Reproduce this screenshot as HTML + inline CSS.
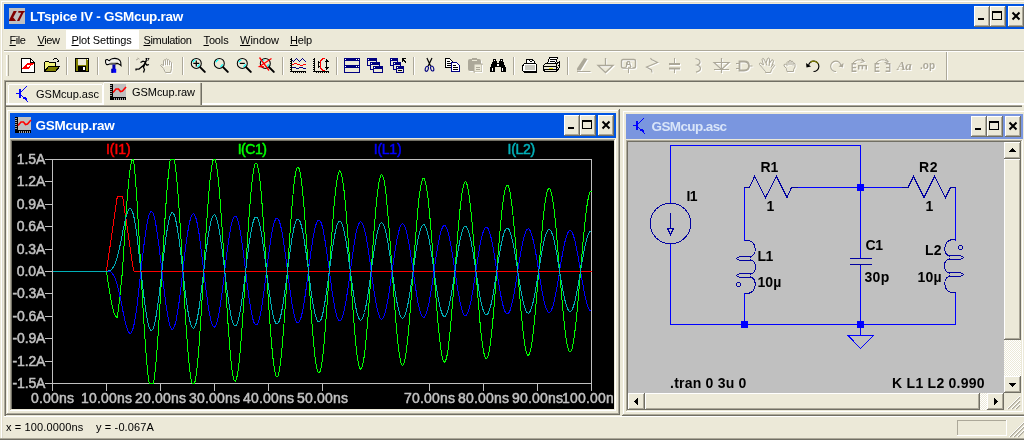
<!DOCTYPE html>
<html><head><meta charset="utf-8"><title>LTspice IV - GSMcup.raw</title>
<style>
html,body{margin:0;padding:0}
body{width:1024px;height:440px;overflow:hidden;background:#ECE9D8;position:relative;font-family:"Liberation Sans",sans-serif}
#app div,#app span,#app svg{position:absolute}
#app span{white-space:pre}
#app u{text-decoration:underline;text-underline-offset:1px}
svg{overflow:visible}
</style></head><body><div id="app" style="position:absolute;left:0;top:0;width:1024px;height:440px;overflow:hidden;will-change:transform">
<div style="left:0px;top:0px;width:1024px;height:440px;background:#ECE9D8;"></div>
<div style="left:1px;top:1px;width:1023px;height:1px;background:#FFFFFF;"></div>
<div style="left:1px;top:1px;width:1px;height:439px;background:#FFFFFF;"></div>
<div style="left:2px;top:2px;width:1022px;height:1px;background:#E0DCCB;"></div>
<div style="left:2px;top:2px;width:1px;height:438px;background:#E0DCCB;"></div>
<div style="left:4px;top:4px;width:1020px;height:25px;background:#0054E3;"></div>
<div style="left:9px;top:8px;width:16px;height:16px;background:#C0C0C0;"></div>
<svg style="left:9px;top:8px" width="16" height="16" viewBox="0 0 16 16"><path d="M4.6 3 H7.8 L4.2 9.6 L5.6 11 L7 13 H0 V12.2 Z M9.3 3 H16 L15.2 4.6 H14.6 L10.4 13 H8 L8.3 12.2 L12.2 4.8 H9.3 Z" fill="#800000"/></svg>
<span style="left:30px;top:9.57px;font-size:13.5px;line-height:13.5px;color:#FFFFFF;font-weight:700;font-style:normal;letter-spacing:-0.273px;">LTspice IV - GSMcup.raw</span>
<div style="left:974px;top:6px;width:16px;height:21px;background:#ECE9D8;"></div>
<div style="left:974px;top:6px;width:16px;height:1px;background:#FFFFFF;"></div>
<div style="left:974px;top:6px;width:1px;height:21px;background:#FFFFFF;"></div>
<div style="left:974px;top:26px;width:16px;height:1px;background:#716F64;"></div>
<div style="left:989px;top:6px;width:1px;height:21px;background:#716F64;"></div>
<div style="left:975px;top:25px;width:14px;height:1px;background:#ACA899;"></div>
<div style="left:988px;top:7px;width:1px;height:19px;background:#ACA899;"></div>
<div style="left:990px;top:6px;width:16px;height:21px;background:#ECE9D8;"></div>
<div style="left:990px;top:6px;width:16px;height:1px;background:#FFFFFF;"></div>
<div style="left:990px;top:6px;width:1px;height:21px;background:#FFFFFF;"></div>
<div style="left:990px;top:26px;width:16px;height:1px;background:#716F64;"></div>
<div style="left:1005px;top:6px;width:1px;height:21px;background:#716F64;"></div>
<div style="left:991px;top:25px;width:14px;height:1px;background:#ACA899;"></div>
<div style="left:1004px;top:7px;width:1px;height:19px;background:#ACA899;"></div>
<div style="left:1008px;top:6px;width:16px;height:21px;background:#ECE9D8;"></div>
<div style="left:1008px;top:6px;width:16px;height:1px;background:#FFFFFF;"></div>
<div style="left:1008px;top:6px;width:1px;height:21px;background:#FFFFFF;"></div>
<div style="left:1008px;top:26px;width:16px;height:1px;background:#716F64;"></div>
<div style="left:1023px;top:6px;width:1px;height:21px;background:#716F64;"></div>
<div style="left:1009px;top:25px;width:14px;height:1px;background:#ACA899;"></div>
<div style="left:1022px;top:7px;width:1px;height:19px;background:#ACA899;"></div>
<div style="left:978px;top:18px;width:6px;height:2px;background:#000;"></div>
<div style="left:992px;top:11px;width:10px;height:9px;background:#000;"></div>
<div style="left:993px;top:13px;width:8px;height:6px;background:#ECE9D8;"></div>
<svg style="left:1012px;top:12px" width="8" height="8" viewBox="0 0 8 8"><path d="M0.5 0.5 L7.5 7.5 M7.5 0.5 L0.5 7.5" stroke="#000" stroke-width="2" fill="none"/></svg>
<div style="left:66px;top:30px;width:73px;height:19px;background:#FFFFFF;"></div>
<span style="left:9.5px;top:34.69px;font-size:11px;line-height:11px;color:#000;font-weight:400;font-style:normal;letter-spacing:-0.434px;"><u>F</u>ile</span>
<span style="left:37.5px;top:34.69px;font-size:11px;line-height:11px;color:#000;font-weight:400;font-style:normal;letter-spacing:-0.414px;"><u>V</u>iew</span>
<span style="left:71.5px;top:34.69px;font-size:11px;line-height:11px;color:#000;font-weight:400;font-style:normal;letter-spacing:-0.136px;"><u>P</u>lot Settings</span>
<span style="left:143.5px;top:34.69px;font-size:11px;line-height:11px;color:#000;font-weight:400;font-style:normal;letter-spacing:-0.336px;"><u>S</u>imulation</span>
<span style="left:203.5px;top:34.69px;font-size:11px;line-height:11px;color:#000;font-weight:400;font-style:normal;letter-spacing:-0.138px;"><u>T</u>ools</span>
<span style="left:240.0px;top:34.69px;font-size:11px;line-height:11px;color:#000;font-weight:400;font-style:normal;letter-spacing:-0.021px;"><u>W</u>indow</span>
<span style="left:290.0px;top:34.69px;font-size:11px;line-height:11px;color:#000;font-weight:400;font-style:normal;letter-spacing:-0.156px;"><u>H</u>elp</span>
<div style="left:4px;top:50px;width:1020px;height:1px;background:#ACA899;"></div>
<div style="left:4px;top:51px;width:1020px;height:1px;background:#FFFFFF;"></div>
<div style="left:6px;top:55px;width:1px;height:21px;background:#FFFFFF;"></div>
<div style="left:7px;top:55px;width:1px;height:21px;background:#ECE9D8;"></div>
<div style="left:8px;top:55px;width:1px;height:21px;background:#ACA899;"></div>
<div style="left:66px;top:57px;width:1px;height:18px;background:#ACA899;"></div>
<div style="left:67px;top:57px;width:1px;height:18px;background:#FFFFFF;"></div>
<div style="left:97px;top:57px;width:1px;height:18px;background:#ACA899;"></div>
<div style="left:98px;top:57px;width:1px;height:18px;background:#FFFFFF;"></div>
<div style="left:128px;top:57px;width:1px;height:18px;background:#ACA899;"></div>
<div style="left:129px;top:57px;width:1px;height:18px;background:#FFFFFF;"></div>
<div style="left:182px;top:57px;width:1px;height:18px;background:#ACA899;"></div>
<div style="left:183px;top:57px;width:1px;height:18px;background:#FFFFFF;"></div>
<div style="left:282px;top:57px;width:1px;height:18px;background:#ACA899;"></div>
<div style="left:283px;top:57px;width:1px;height:18px;background:#FFFFFF;"></div>
<div style="left:336px;top:57px;width:1px;height:18px;background:#ACA899;"></div>
<div style="left:337px;top:57px;width:1px;height:18px;background:#FFFFFF;"></div>
<div style="left:413px;top:57px;width:1px;height:18px;background:#ACA899;"></div>
<div style="left:414px;top:57px;width:1px;height:18px;background:#FFFFFF;"></div>
<div style="left:513px;top:57px;width:1px;height:18px;background:#ACA899;"></div>
<div style="left:514px;top:57px;width:1px;height:18px;background:#FFFFFF;"></div>
<div style="left:567px;top:57px;width:1px;height:18px;background:#ACA899;"></div>
<div style="left:568px;top:57px;width:1px;height:18px;background:#FFFFFF;"></div>
<div style="left:946px;top:52px;width:1px;height:28px;background:#ACA899;"></div>
<div style="left:947px;top:52px;width:1px;height:28px;background:#FFFFFF;"></div>
<div style="left:4px;top:80px;width:1020px;height:1px;background:#ACA899;"></div>
<div style="left:5px;top:81px;width:1019px;height:1px;background:#716F64;"></div>
<div style="left:4px;top:80px;width:1px;height:336px;background:#ACA899;"></div>
<div style="left:5px;top:81px;width:1px;height:335px;background:#716F64;"></div>
<div style="left:9px;top:84px;width:93px;height:1px;background:#FFFFFF;"></div>
<div style="left:8px;top:85px;width:1px;height:18px;background:#FFFFFF;"></div>
<div style="left:102px;top:85px;width:1px;height:18px;background:#FFFFFF;"></div>
<div style="left:104px;top:82px;width:96px;height:1px;background:#FFFFFF;"></div>
<div style="left:103px;top:83px;width:1px;height:21px;background:#FFFFFF;"></div>
<div style="left:200px;top:83px;width:1px;height:21px;background:#ACA899;"></div>
<div style="left:201px;top:83px;width:1px;height:21px;background:#716F64;"></div>
<div style="left:6px;top:103px;width:1018px;height:1px;background:#FFFFFF;"></div>
<div style="left:6px;top:104px;width:1018px;height:1px;background:#FFFFFF;"></div>
<div style="left:104px;top:103px;width:96px;height:2px;background:#ECE9D8;"></div>
<div style="left:200px;top:103px;width:1px;height:2px;background:#ACA899;"></div>
<div style="left:201px;top:103px;width:1px;height:2px;background:#716F64;"></div>
<div style="left:6px;top:105px;width:1016px;height:1px;background:#ACA899;"></div>
<div style="left:6px;top:106px;width:1016px;height:1px;background:#716F64;"></div>
<svg style="left:16px;top:86px" width="12" height="16" viewBox="0 0 12 16" shape-rendering="crispEdges" fill="#0000FF"><rect x="0" y="7" width="4" height="1"/><rect x="3" y="3" width="2" height="9"/><rect x="5" y="5" width="1" height="1"/><rect x="6" y="4" width="1" height="1"/><rect x="7" y="3" width="1" height="1"/><rect x="8" y="2" width="1" height="1"/><rect x="9" y="1" width="1" height="1"/><rect x="10" y="0" width="1" height="1"/><rect x="5" y="9" width="1" height="1"/><rect x="6" y="10" width="1" height="1"/><rect x="7" y="11" width="1" height="1"/><rect x="8" y="12" width="1" height="1"/><rect x="9" y="13" width="1" height="1"/><rect x="10" y="14" width="1" height="1"/><rect x="11" y="15" width="1" height="1"/><rect x="8" y="11" width="2" height="2"/><rect x="9" y="12" width="2" height="2"/><rect x="7" y="12" width="1" height="1"/></svg>
<span style="left:36px;top:88.69px;font-size:11px;line-height:11px;color:#000;font-weight:400;font-style:normal;letter-spacing:0.003px;">GSMcup.asc</span>
<div style="left:110px;top:84px;width:3px;height:16px;background:#000;"></div>
<div style="left:110px;top:97px;width:16px;height:3px;background:#000;"></div>
<div style="left:113px;top:84px;width:13px;height:13px;background:#C0C0C0;"></div>
<div style="left:110px;top:85px;width:2px;height:1px;background:#A0A0A0;"></div>
<div style="left:110px;top:87px;width:2px;height:1px;background:#A0A0A0;"></div>
<div style="left:110px;top:89px;width:2px;height:1px;background:#A0A0A0;"></div>
<div style="left:110px;top:91px;width:2px;height:1px;background:#A0A0A0;"></div>
<div style="left:110px;top:93px;width:2px;height:1px;background:#A0A0A0;"></div>
<div style="left:110px;top:95px;width:2px;height:1px;background:#A0A0A0;"></div>
<div style="left:114px;top:98px;width:1px;height:2px;background:#A0A0A0;"></div>
<div style="left:116px;top:98px;width:1px;height:2px;background:#A0A0A0;"></div>
<div style="left:118px;top:98px;width:1px;height:2px;background:#A0A0A0;"></div>
<div style="left:120px;top:98px;width:1px;height:2px;background:#A0A0A0;"></div>
<div style="left:122px;top:98px;width:1px;height:2px;background:#A0A0A0;"></div>
<div style="left:124px;top:98px;width:1px;height:2px;background:#A0A0A0;"></div>
<svg style="left:110px;top:84px" width="16" height="16" viewBox="0 0 16 16"><path d="M3 8.5 L6 5 L8.5 5 L10.5 7.5 L12.5 7 L16 3" stroke="#FF0000" stroke-width="1.6" fill="none"/></svg>
<span style="left:132px;top:86.69px;font-size:11px;line-height:11px;color:#000;font-weight:400;font-style:normal;letter-spacing:-0.058px;">GSMcup.raw</span>
<div style="left:6px;top:109px;width:614px;height:306px;background:#ECE9D8;"></div>
<div style="left:6px;top:109px;width:614px;height:1px;background:#ECE9D8;"></div>
<div style="left:6px;top:109px;width:1px;height:306px;background:#ECE9D8;"></div>
<div style="left:6px;top:414px;width:614px;height:1px;background:#716F64;"></div>
<div style="left:619px;top:109px;width:1px;height:306px;background:#716F64;"></div>
<div style="left:7px;top:110px;width:612px;height:1px;background:#FFFFFF;"></div>
<div style="left:7px;top:110px;width:1px;height:304px;background:#FFFFFF;"></div>
<div style="left:7px;top:413px;width:612px;height:1px;background:#ACA899;"></div>
<div style="left:618px;top:110px;width:1px;height:304px;background:#ACA899;"></div>
<div style="left:10px;top:113px;width:606px;height:25px;background:#0054E3;"></div>
<div style="left:15px;top:117px;width:3px;height:16px;background:#000;"></div>
<div style="left:15px;top:130px;width:16px;height:3px;background:#000;"></div>
<div style="left:18px;top:117px;width:13px;height:13px;background:#C0C0C0;"></div>
<div style="left:15px;top:118px;width:2px;height:1px;background:#A0A0A0;"></div>
<div style="left:15px;top:120px;width:2px;height:1px;background:#A0A0A0;"></div>
<div style="left:15px;top:122px;width:2px;height:1px;background:#A0A0A0;"></div>
<div style="left:15px;top:124px;width:2px;height:1px;background:#A0A0A0;"></div>
<div style="left:15px;top:126px;width:2px;height:1px;background:#A0A0A0;"></div>
<div style="left:15px;top:128px;width:2px;height:1px;background:#A0A0A0;"></div>
<div style="left:19px;top:131px;width:1px;height:2px;background:#A0A0A0;"></div>
<div style="left:21px;top:131px;width:1px;height:2px;background:#A0A0A0;"></div>
<div style="left:23px;top:131px;width:1px;height:2px;background:#A0A0A0;"></div>
<div style="left:25px;top:131px;width:1px;height:2px;background:#A0A0A0;"></div>
<div style="left:27px;top:131px;width:1px;height:2px;background:#A0A0A0;"></div>
<div style="left:29px;top:131px;width:1px;height:2px;background:#A0A0A0;"></div>
<svg style="left:15px;top:117px" width="16" height="16" viewBox="0 0 16 16"><path d="M3 8.5 L6 5 L8.5 5 L10.5 7.5 L12.5 7 L16 3" stroke="#FF0000" stroke-width="1.6" fill="none"/></svg>
<span style="left:35.5px;top:118.57px;font-size:13.5px;line-height:13.5px;color:#FFFFFF;font-weight:700;font-style:normal;letter-spacing:-0.277px;">GSMcup.raw</span>
<div style="left:564px;top:115px;width:16px;height:21px;background:#ECE9D8;"></div>
<div style="left:564px;top:115px;width:16px;height:1px;background:#FFFFFF;"></div>
<div style="left:564px;top:115px;width:1px;height:21px;background:#FFFFFF;"></div>
<div style="left:564px;top:135px;width:16px;height:1px;background:#716F64;"></div>
<div style="left:579px;top:115px;width:1px;height:21px;background:#716F64;"></div>
<div style="left:565px;top:134px;width:14px;height:1px;background:#ACA899;"></div>
<div style="left:578px;top:116px;width:1px;height:19px;background:#ACA899;"></div>
<div style="left:580px;top:115px;width:16px;height:21px;background:#ECE9D8;"></div>
<div style="left:580px;top:115px;width:16px;height:1px;background:#FFFFFF;"></div>
<div style="left:580px;top:115px;width:1px;height:21px;background:#FFFFFF;"></div>
<div style="left:580px;top:135px;width:16px;height:1px;background:#716F64;"></div>
<div style="left:595px;top:115px;width:1px;height:21px;background:#716F64;"></div>
<div style="left:581px;top:134px;width:14px;height:1px;background:#ACA899;"></div>
<div style="left:594px;top:116px;width:1px;height:19px;background:#ACA899;"></div>
<div style="left:598px;top:115px;width:16px;height:21px;background:#ECE9D8;"></div>
<div style="left:598px;top:115px;width:16px;height:1px;background:#FFFFFF;"></div>
<div style="left:598px;top:115px;width:1px;height:21px;background:#FFFFFF;"></div>
<div style="left:598px;top:135px;width:16px;height:1px;background:#716F64;"></div>
<div style="left:613px;top:115px;width:1px;height:21px;background:#716F64;"></div>
<div style="left:599px;top:134px;width:14px;height:1px;background:#ACA899;"></div>
<div style="left:612px;top:116px;width:1px;height:19px;background:#ACA899;"></div>
<div style="left:568px;top:127px;width:6px;height:2px;background:#000;"></div>
<div style="left:582px;top:120px;width:10px;height:9px;background:#000;"></div>
<div style="left:583px;top:122px;width:8px;height:6px;background:#ECE9D8;"></div>
<svg style="left:602px;top:121px" width="8" height="8" viewBox="0 0 8 8"><path d="M0.5 0.5 L7.5 7.5 M7.5 0.5 L0.5 7.5" stroke="#000" stroke-width="2" fill="none"/></svg>
<div style="left:10px;top:139px;width:606px;height:1px;background:#ACA899;"></div>
<div style="left:10px;top:139px;width:1px;height:272px;background:#ACA899;"></div>
<div style="left:10px;top:410px;width:606px;height:1px;background:#FFFFFF;"></div>
<div style="left:615px;top:139px;width:1px;height:272px;background:#FFFFFF;"></div>
<div style="left:11px;top:140px;width:604px;height:1px;background:#716F64;"></div>
<div style="left:11px;top:140px;width:1px;height:270px;background:#716F64;"></div>
<div style="left:11px;top:409px;width:604px;height:1px;background:#ECE9D8;"></div>
<div style="left:614px;top:140px;width:1px;height:270px;background:#ECE9D8;"></div>
<div style="left:12px;top:141px;width:602px;height:268px;background:#000;"></div>
<div style="left:622px;top:110px;width:406px;height:306px;background:#ECE9D8;"></div>
<div style="left:622px;top:110px;width:406px;height:1px;background:#ECE9D8;"></div>
<div style="left:622px;top:110px;width:1px;height:306px;background:#ECE9D8;"></div>
<div style="left:622px;top:415px;width:406px;height:1px;background:#716F64;"></div>
<div style="left:1027px;top:110px;width:1px;height:306px;background:#716F64;"></div>
<div style="left:623px;top:111px;width:404px;height:1px;background:#FFFFFF;"></div>
<div style="left:623px;top:111px;width:1px;height:304px;background:#FFFFFF;"></div>
<div style="left:623px;top:414px;width:404px;height:1px;background:#ACA899;"></div>
<div style="left:1026px;top:111px;width:1px;height:304px;background:#ACA899;"></div>
<div style="left:626px;top:114px;width:397px;height:25px;background:#7A96DF;"></div>
<svg style="left:633px;top:118px" width="12" height="16" viewBox="0 0 12 16" shape-rendering="crispEdges" fill="#0000FF"><rect x="0" y="7" width="4" height="1"/><rect x="3" y="3" width="2" height="9"/><rect x="5" y="5" width="1" height="1"/><rect x="6" y="4" width="1" height="1"/><rect x="7" y="3" width="1" height="1"/><rect x="8" y="2" width="1" height="1"/><rect x="9" y="1" width="1" height="1"/><rect x="10" y="0" width="1" height="1"/><rect x="5" y="9" width="1" height="1"/><rect x="6" y="10" width="1" height="1"/><rect x="7" y="11" width="1" height="1"/><rect x="8" y="12" width="1" height="1"/><rect x="9" y="13" width="1" height="1"/><rect x="10" y="14" width="1" height="1"/><rect x="11" y="15" width="1" height="1"/><rect x="8" y="11" width="2" height="2"/><rect x="9" y="12" width="2" height="2"/><rect x="7" y="12" width="1" height="1"/></svg>
<span style="left:651.5px;top:119.57px;font-size:13.5px;line-height:13.5px;color:#D8E4F8;font-weight:700;font-style:normal;letter-spacing:-0.603px;">GSMcup.asc</span>
<div style="left:971px;top:116px;width:16px;height:21px;background:#ECE9D8;"></div>
<div style="left:971px;top:116px;width:16px;height:1px;background:#FFFFFF;"></div>
<div style="left:971px;top:116px;width:1px;height:21px;background:#FFFFFF;"></div>
<div style="left:971px;top:136px;width:16px;height:1px;background:#716F64;"></div>
<div style="left:986px;top:116px;width:1px;height:21px;background:#716F64;"></div>
<div style="left:972px;top:135px;width:14px;height:1px;background:#ACA899;"></div>
<div style="left:985px;top:117px;width:1px;height:19px;background:#ACA899;"></div>
<div style="left:987px;top:116px;width:16px;height:21px;background:#ECE9D8;"></div>
<div style="left:987px;top:116px;width:16px;height:1px;background:#FFFFFF;"></div>
<div style="left:987px;top:116px;width:1px;height:21px;background:#FFFFFF;"></div>
<div style="left:987px;top:136px;width:16px;height:1px;background:#716F64;"></div>
<div style="left:1002px;top:116px;width:1px;height:21px;background:#716F64;"></div>
<div style="left:988px;top:135px;width:14px;height:1px;background:#ACA899;"></div>
<div style="left:1001px;top:117px;width:1px;height:19px;background:#ACA899;"></div>
<div style="left:1005px;top:116px;width:16px;height:21px;background:#ECE9D8;"></div>
<div style="left:1005px;top:116px;width:16px;height:1px;background:#FFFFFF;"></div>
<div style="left:1005px;top:116px;width:1px;height:21px;background:#FFFFFF;"></div>
<div style="left:1005px;top:136px;width:16px;height:1px;background:#716F64;"></div>
<div style="left:1020px;top:116px;width:1px;height:21px;background:#716F64;"></div>
<div style="left:1006px;top:135px;width:14px;height:1px;background:#ACA899;"></div>
<div style="left:1019px;top:117px;width:1px;height:19px;background:#ACA899;"></div>
<div style="left:975px;top:128px;width:6px;height:2px;background:#000;"></div>
<div style="left:989px;top:121px;width:10px;height:9px;background:#000;"></div>
<div style="left:990px;top:123px;width:8px;height:6px;background:#ECE9D8;"></div>
<svg style="left:1009px;top:122px" width="8" height="8" viewBox="0 0 8 8"><path d="M0.5 0.5 L7.5 7.5 M7.5 0.5 L0.5 7.5" stroke="#000" stroke-width="2" fill="none"/></svg>
<div style="left:626px;top:140px;width:397px;height:1px;background:#ACA899;"></div>
<div style="left:626px;top:140px;width:1px;height:272px;background:#ACA899;"></div>
<div style="left:626px;top:411px;width:397px;height:1px;background:#FFFFFF;"></div>
<div style="left:1022px;top:140px;width:1px;height:272px;background:#FFFFFF;"></div>
<div style="left:627px;top:141px;width:395px;height:1px;background:#716F64;"></div>
<div style="left:627px;top:141px;width:1px;height:270px;background:#716F64;"></div>
<div style="left:627px;top:410px;width:395px;height:1px;background:#ECE9D8;"></div>
<div style="left:1021px;top:141px;width:1px;height:270px;background:#ECE9D8;"></div>
<div style="left:628px;top:142px;width:376px;height:251px;background:#C0C0C0;"></div>
<div style="left:1004px;top:142px;width:17px;height:268px;background:#ECE9D8;"></div>
<div style="left:1023px;top:140px;width:1px;height:272px;background:#ECE9D8;"></div>
<div style="left:628px;top:393px;width:376px;height:17px;background:#ECE9D8;"></div>
<div style="left:1004px;top:142px;width:17px;height:17px;background:#ECE9D8;"></div>
<div style="left:1004px;top:142px;width:17px;height:1px;background:#FFFFFF;"></div>
<div style="left:1004px;top:142px;width:1px;height:17px;background:#FFFFFF;"></div>
<div style="left:1004px;top:158px;width:17px;height:1px;background:#716F64;"></div>
<div style="left:1020px;top:142px;width:1px;height:17px;background:#716F64;"></div>
<div style="left:1005px;top:157px;width:15px;height:1px;background:#ACA899;"></div>
<div style="left:1019px;top:143px;width:1px;height:15px;background:#ACA899;"></div>
<svg style="left:1009px;top:148px" width="7" height="4" viewBox="0 0 7 4" shape-rendering="crispEdges"><polygon points="0,4 7,4 3.5,0" fill="#000"/></svg>
<div style="left:1004px;top:159px;width:17px;height:181px;background:#ECE9D8;"></div>
<div style="left:1004px;top:159px;width:17px;height:1px;background:#FFFFFF;"></div>
<div style="left:1004px;top:159px;width:1px;height:181px;background:#FFFFFF;"></div>
<div style="left:1004px;top:339px;width:17px;height:1px;background:#716F64;"></div>
<div style="left:1020px;top:159px;width:1px;height:181px;background:#716F64;"></div>
<div style="left:1005px;top:338px;width:15px;height:1px;background:#ACA899;"></div>
<div style="left:1019px;top:160px;width:1px;height:179px;background:#ACA899;"></div>
<div style="left:1004px;top:340px;width:17px;height:36px;background:#F6F4EC;background-image:conic-gradient(#FFF 25%,#ECE9D8 0 50%,#FFF 0 75%,#ECE9D8 0);background-size:2px 2px;"></div>
<div style="left:1004px;top:376px;width:17px;height:17px;background:#ECE9D8;"></div>
<div style="left:1004px;top:376px;width:17px;height:1px;background:#FFFFFF;"></div>
<div style="left:1004px;top:376px;width:1px;height:17px;background:#FFFFFF;"></div>
<div style="left:1004px;top:392px;width:17px;height:1px;background:#716F64;"></div>
<div style="left:1020px;top:376px;width:1px;height:17px;background:#716F64;"></div>
<div style="left:1005px;top:391px;width:15px;height:1px;background:#ACA899;"></div>
<div style="left:1019px;top:377px;width:1px;height:15px;background:#ACA899;"></div>
<svg style="left:1009px;top:383px" width="7" height="4" viewBox="0 0 7 4" shape-rendering="crispEdges"><polygon points="0,0 7,0 3.5,4" fill="#000"/></svg>
<div style="left:628px;top:393px;width:17px;height:17px;background:#ECE9D8;"></div>
<div style="left:628px;top:393px;width:17px;height:1px;background:#FFFFFF;"></div>
<div style="left:628px;top:393px;width:1px;height:17px;background:#FFFFFF;"></div>
<div style="left:628px;top:409px;width:17px;height:1px;background:#716F64;"></div>
<div style="left:644px;top:393px;width:1px;height:17px;background:#716F64;"></div>
<div style="left:629px;top:408px;width:15px;height:1px;background:#ACA899;"></div>
<div style="left:643px;top:394px;width:1px;height:15px;background:#ACA899;"></div>
<svg style="left:634px;top:398px" width="4" height="7" viewBox="0 0 4 7" shape-rendering="crispEdges"><polygon points="4,0 4,7 0,3.5" fill="#000"/></svg>
<div style="left:645px;top:393px;width:335px;height:17px;background:#ECE9D8;"></div>
<div style="left:645px;top:393px;width:335px;height:1px;background:#FFFFFF;"></div>
<div style="left:645px;top:393px;width:1px;height:17px;background:#FFFFFF;"></div>
<div style="left:645px;top:409px;width:335px;height:1px;background:#716F64;"></div>
<div style="left:979px;top:393px;width:1px;height:17px;background:#716F64;"></div>
<div style="left:646px;top:408px;width:333px;height:1px;background:#ACA899;"></div>
<div style="left:978px;top:394px;width:1px;height:15px;background:#ACA899;"></div>
<div style="left:980px;top:393px;width:7px;height:17px;background:#F6F4EC;background-image:conic-gradient(#FFF 25%,#ECE9D8 0 50%,#FFF 0 75%,#ECE9D8 0);background-size:2px 2px;"></div>
<div style="left:987px;top:393px;width:17px;height:17px;background:#ECE9D8;"></div>
<div style="left:987px;top:393px;width:17px;height:1px;background:#FFFFFF;"></div>
<div style="left:987px;top:393px;width:1px;height:17px;background:#FFFFFF;"></div>
<div style="left:987px;top:409px;width:17px;height:1px;background:#716F64;"></div>
<div style="left:1003px;top:393px;width:1px;height:17px;background:#716F64;"></div>
<div style="left:988px;top:408px;width:15px;height:1px;background:#ACA899;"></div>
<div style="left:1002px;top:394px;width:1px;height:15px;background:#ACA899;"></div>
<svg style="left:994px;top:398px" width="4" height="7" viewBox="0 0 4 7" shape-rendering="crispEdges"><polygon points="0,0 0,7 4,3.5" fill="#000"/></svg>
<svg style="left:1004px;top:393px" width="17" height="17" viewBox="0 0 17 17"><path d="M4 16 L16 4 M8 16 L16 8 M12 16 L16 12" stroke="#ACA899" stroke-width="1.5"/><path d="M3 16 L16 3 M7 16 L16 7 M11 16 L16 11" stroke="#FFF" stroke-width="1"/></svg>
<div style="left:4px;top:416px;width:1020px;height:1px;background:#FFFFFF;"></div>
<span style="left:6px;top:422.19px;font-size:11px;line-height:11px;color:#000;font-weight:400;font-style:normal;letter-spacing:0.127px;">x = 100.0000ns    y = -0.067A</span>
<div style="left:957px;top:420px;width:50px;height:1px;background:#ACA899;"></div>
<div style="left:957px;top:420px;width:1px;height:16px;background:#ACA899;"></div>
<div style="left:957px;top:435px;width:50px;height:1px;background:#FFFFFF;"></div>
<div style="left:1006px;top:420px;width:1px;height:16px;background:#FFFFFF;"></div>
<svg style="left:1008px;top:421px" width="16" height="16" viewBox="0 0 16 16"><path d="M2 16 L16 2 M6 16 L16 6 M10 16 L16 10" stroke="#ACA899" stroke-width="1.5"/><path d="M1 16 L16 1 M5 16 L16 5 M9 16 L16 9" stroke="#FFF" stroke-width="1"/></svg>
<div style="left:0px;top:438px;width:1024px;height:1px;background:#ACA899;"></div>
<div style="left:0px;top:439px;width:1024px;height:1px;background:#716F64;"></div>
<div id="plot" style="left:0;top:0;width:613px;height:409px;overflow:hidden">
<div style="left:52px;top:159px;width:540px;height:1px;background:#C0C0C0;"></div>
<div style="left:52px;top:383px;width:540px;height:1px;background:#C0C0C0;"></div>
<div style="left:52px;top:159px;width:1px;height:232px;background:#C0C0C0;"></div>
<div style="left:591px;top:159px;width:1px;height:232px;background:#C0C0C0;"></div>
<div style="left:45px;top:159px;width:7px;height:1px;background:#C0C0C0;"></div>
<span style="left:16.8px;top:152.15px;font-size:14px;line-height:14px;color:#C0C0C0;font-weight:400;font-style:normal;letter-spacing:-0.103px;-webkit-text-stroke:0.5px;">1.5A</span>
<div style="left:45px;top:181px;width:7px;height:1px;background:#C0C0C0;"></div>
<span style="left:16.8px;top:174.15px;font-size:14px;line-height:14px;color:#C0C0C0;font-weight:400;font-style:normal;letter-spacing:-0.103px;-webkit-text-stroke:0.5px;">1.2A</span>
<div style="left:45px;top:204px;width:7px;height:1px;background:#C0C0C0;"></div>
<span style="left:16.8px;top:197.15px;font-size:14px;line-height:14px;color:#C0C0C0;font-weight:400;font-style:normal;letter-spacing:-0.103px;-webkit-text-stroke:0.5px;">0.9A</span>
<div style="left:45px;top:226px;width:7px;height:1px;background:#C0C0C0;"></div>
<span style="left:16.8px;top:219.15px;font-size:14px;line-height:14px;color:#C0C0C0;font-weight:400;font-style:normal;letter-spacing:-0.103px;-webkit-text-stroke:0.5px;">0.6A</span>
<div style="left:45px;top:249px;width:7px;height:1px;background:#C0C0C0;"></div>
<span style="left:16.8px;top:242.15px;font-size:14px;line-height:14px;color:#C0C0C0;font-weight:400;font-style:normal;letter-spacing:-0.103px;-webkit-text-stroke:0.5px;">0.3A</span>
<div style="left:45px;top:271px;width:7px;height:1px;background:#C0C0C0;"></div>
<span style="left:16.8px;top:264.15px;font-size:14px;line-height:14px;color:#C0C0C0;font-weight:400;font-style:normal;letter-spacing:-0.103px;-webkit-text-stroke:0.5px;">0.0A</span>
<div style="left:45px;top:293px;width:7px;height:1px;background:#C0C0C0;"></div>
<span style="left:12.5px;top:286.15px;font-size:14px;line-height:14px;color:#C0C0C0;font-weight:400;font-style:normal;letter-spacing:-0.154px;-webkit-text-stroke:0.5px;">-0.3A</span>
<div style="left:45px;top:316px;width:7px;height:1px;background:#C0C0C0;"></div>
<span style="left:12.5px;top:309.15px;font-size:14px;line-height:14px;color:#C0C0C0;font-weight:400;font-style:normal;letter-spacing:-0.154px;-webkit-text-stroke:0.5px;">-0.6A</span>
<div style="left:45px;top:338px;width:7px;height:1px;background:#C0C0C0;"></div>
<span style="left:12.5px;top:331.15px;font-size:14px;line-height:14px;color:#C0C0C0;font-weight:400;font-style:normal;letter-spacing:-0.154px;-webkit-text-stroke:0.5px;">-0.9A</span>
<div style="left:45px;top:361px;width:7px;height:1px;background:#C0C0C0;"></div>
<span style="left:12.5px;top:354.15px;font-size:14px;line-height:14px;color:#C0C0C0;font-weight:400;font-style:normal;letter-spacing:-0.154px;-webkit-text-stroke:0.5px;">-1.2A</span>
<div style="left:45px;top:383px;width:7px;height:1px;background:#C0C0C0;"></div>
<span style="left:12.5px;top:376.15px;font-size:14px;line-height:14px;color:#C0C0C0;font-weight:400;font-style:normal;letter-spacing:-0.154px;-webkit-text-stroke:0.5px;">-1.5A</span>
<span style="left:30.9px;top:391.35px;font-size:14px;line-height:14px;color:#C0C0C0;font-weight:400;font-style:normal;letter-spacing:0.226px;-webkit-text-stroke:0.5px;">0.00ns</span>
<div style="left:106px;top:384px;width:1px;height:7px;background:#C0C0C0;"></div>
<span style="left:80.9px;top:391.35px;font-size:14px;line-height:14px;color:#C0C0C0;font-weight:400;font-style:normal;letter-spacing:0.225px;-webkit-text-stroke:0.5px;">10.00ns</span>
<div style="left:160px;top:384px;width:1px;height:7px;background:#C0C0C0;"></div>
<span style="left:134.9px;top:391.35px;font-size:14px;line-height:14px;color:#C0C0C0;font-weight:400;font-style:normal;letter-spacing:0.225px;-webkit-text-stroke:0.5px;">20.00ns</span>
<div style="left:214px;top:384px;width:1px;height:7px;background:#C0C0C0;"></div>
<span style="left:188.9px;top:391.35px;font-size:14px;line-height:14px;color:#C0C0C0;font-weight:400;font-style:normal;letter-spacing:0.225px;-webkit-text-stroke:0.5px;">30.00ns</span>
<div style="left:268px;top:384px;width:1px;height:7px;background:#C0C0C0;"></div>
<span style="left:242.9px;top:391.35px;font-size:14px;line-height:14px;color:#C0C0C0;font-weight:400;font-style:normal;letter-spacing:0.225px;-webkit-text-stroke:0.5px;">40.00ns</span>
<div style="left:322px;top:384px;width:1px;height:7px;background:#C0C0C0;"></div>
<span style="left:296.9px;top:391.35px;font-size:14px;line-height:14px;color:#C0C0C0;font-weight:400;font-style:normal;letter-spacing:0.225px;-webkit-text-stroke:0.5px;">50.00ns</span>
<div style="left:429px;top:384px;width:1px;height:7px;background:#C0C0C0;"></div>
<span style="left:403.9px;top:391.35px;font-size:14px;line-height:14px;color:#C0C0C0;font-weight:400;font-style:normal;letter-spacing:0.225px;-webkit-text-stroke:0.5px;">70.00ns</span>
<div style="left:483px;top:384px;width:1px;height:7px;background:#C0C0C0;"></div>
<span style="left:457.9px;top:391.35px;font-size:14px;line-height:14px;color:#C0C0C0;font-weight:400;font-style:normal;letter-spacing:0.225px;-webkit-text-stroke:0.5px;">80.00ns</span>
<div style="left:537px;top:384px;width:1px;height:7px;background:#C0C0C0;"></div>
<span style="left:511.9px;top:391.35px;font-size:14px;line-height:14px;color:#C0C0C0;font-weight:400;font-style:normal;letter-spacing:0.225px;-webkit-text-stroke:0.5px;">90.00ns</span>
<span style="left:561.9px;top:391.35px;font-size:14px;line-height:14px;color:#C0C0C0;font-weight:400;font-style:normal;letter-spacing:0.224px;-webkit-text-stroke:0.5px;">100.00ns</span>
<span style="left:106px;top:142.15px;font-size:14px;line-height:14px;color:#FF0000;font-weight:400;font-style:normal;letter-spacing:-0.078px;-webkit-text-stroke:0.5px;">I(I1)</span>
<span style="left:237.7px;top:142.15px;font-size:14px;line-height:14px;color:#00FF00;font-weight:400;font-style:normal;letter-spacing:-0.465px;-webkit-text-stroke:0.5px;">I(C1)</span>
<span style="left:373.8px;top:142.15px;font-size:14px;line-height:14px;color:#0000FF;font-weight:400;font-style:normal;letter-spacing:-0.259px;-webkit-text-stroke:0.5px;">I(L1)</span>
<span style="left:507.5px;top:142.15px;font-size:14px;line-height:14px;color:#00B0B8;font-weight:400;font-style:normal;letter-spacing:-0.259px;-webkit-text-stroke:0.5px;">I(L2)</span>
<svg style="left:0;top:0" width="1024" height="440" viewBox="0 0 1024 440" shape-rendering="crispEdges"><path d="M52.5 271.0 L53.0 271.0 L53.5 271.0 L54.0 271.0 L54.5 271.0 L55.0 271.0 L55.5 271.0 L56.0 271.0 L56.5 271.0 L57.0 271.0 L57.5 271.0 L58.0 271.0 L58.5 271.0 L59.0 271.0 L59.5 271.0 L60.0 271.0 L60.4 271.0 L60.9 271.0 L61.4 271.0 L61.9 271.0 L62.4 271.0 L62.9 271.0 L63.4 271.0 L63.9 271.0 L64.4 271.0 L64.9 271.0 L65.4 271.0 L65.9 271.0 L66.4 271.0 L66.9 271.0 L67.4 271.0 L67.9 271.0 L68.4 271.0 L68.9 271.0 L69.4 271.0 L69.9 271.0 L70.4 271.0 L70.9 271.0 L71.4 271.0 L71.9 271.0 L72.4 271.0 L72.9 271.0 L73.4 271.0 L73.9 271.0 L74.4 271.0 L74.9 271.0 L75.4 271.0 L75.8 271.0 L76.3 271.0 L76.8 271.0 L77.3 271.0 L77.8 271.0 L78.3 271.0 L78.8 271.0 L79.3 271.0 L79.8 271.0 L80.3 271.0 L80.8 271.0 L81.3 271.0 L81.8 271.0 L82.3 271.0 L82.8 271.0 L83.3 271.0 L83.8 271.0 L84.3 271.0 L84.8 271.0 L85.3 271.0 L85.8 271.0 L86.3 271.0 L86.8 271.0 L87.3 271.0 L87.8 271.0 L88.3 271.0 L88.8 271.0 L89.3 271.0 L89.8 271.0 L90.3 271.0 L90.8 271.0 L91.3 271.0 L91.7 271.0 L92.2 271.0 L92.7 271.0 L93.2 271.0 L93.7 271.0 L94.2 271.0 L94.7 271.0 L95.2 271.0 L95.7 271.0 L96.2 271.0 L96.7 271.0 L97.2 271.0 L97.7 271.0 L98.2 271.0 L98.7 271.0 L99.2 271.0 L99.7 271.0 L100.2 271.0 L100.7 271.0 L101.2 271.0 L101.7 271.0 L102.2 271.0 L102.7 271.0 L103.2 271.0 L103.7 271.0 L104.2 271.0 L104.7 271.0 L105.2 271.0 L105.7 271.0 L106.2 271.0 L106.7 270.0 L107.1 266.5 L107.6 263.1 L108.1 259.7 L108.6 256.2 L109.1 252.8 L109.6 249.3 L110.1 245.9 L110.6 242.5 L111.1 239.0 L111.6 235.6 L112.1 232.2 L112.6 228.7 L113.1 225.3 L113.6 221.9 L114.1 218.4 L114.6 215.0 L115.1 211.6 L115.6 208.1 L116.1 204.7 L116.6 201.3 L117.1 197.8 L117.6 196.3 L118.1 196.3 L118.6 196.3 L119.1 196.3 L119.6 196.3 L120.1 196.3 L120.6 196.3 L121.1 196.3 L121.6 196.3 L122.1 196.3 L122.5 196.3 L123.0 198.7 L123.5 202.2 L124.0 205.6 L124.5 209.0 L125.0 212.5 L125.5 215.9 L126.0 219.3 L126.5 222.8 L127.0 226.2 L127.5 229.6 L128.0 233.1 L128.5 236.5 L129.0 239.9 L129.5 243.4 L130.0 246.8 L130.5 250.2 L131.0 253.7 L131.5 257.1 L132.0 260.5 L132.5 264.0 L133.0 267.4 L133.5 270.9 L134.0 271.0 L134.5 271.0 L135.0 271.0 L135.5 271.0 L136.0 271.0 L136.5 271.0 L137.0 271.0 L137.5 271.0 L137.9 271.0 L138.4 271.0 L138.9 271.0 L139.4 271.0 L139.9 271.0 L140.4 271.0 L140.9 271.0 L141.4 271.0 L141.9 271.0 L142.4 271.0 L142.9 271.0 L143.4 271.0 L143.9 271.0 L144.4 271.0 L144.9 271.0 L145.4 271.0 L145.9 271.0 L146.4 271.0 L146.9 271.0 L147.4 271.0 L147.9 271.0 L148.4 271.0 L148.9 271.0 L149.4 271.0 L149.9 271.0 L150.4 271.0 L150.9 271.0 L151.4 271.0 L151.9 271.0 L152.4 271.0 L152.9 271.0 L153.4 271.0 L153.8 271.0 L154.3 271.0 L154.8 271.0 L155.3 271.0 L155.8 271.0 L156.3 271.0 L156.8 271.0 L157.3 271.0 L157.8 271.0 L158.3 271.0 L158.8 271.0 L159.3 271.0 L159.8 271.0 L160.3 271.0 L160.8 271.0 L161.3 271.0 L161.8 271.0 L162.3 271.0 L162.8 271.0 L163.3 271.0 L163.8 271.0 L164.3 271.0 L164.8 271.0 L165.3 271.0 L165.8 271.0 L166.3 271.0 L166.8 271.0 L167.3 271.0 L167.8 271.0 L168.3 271.0 L168.8 271.0 L169.2 271.0 L169.7 271.0 L170.2 271.0 L170.7 271.0 L171.2 271.0 L171.7 271.0 L172.2 271.0 L172.7 271.0 L173.2 271.0 L173.7 271.0 L174.2 271.0 L174.7 271.0 L175.2 271.0 L175.7 271.0 L176.2 271.0 L176.7 271.0 L177.2 271.0 L177.7 271.0 L178.2 271.0 L178.7 271.0 L179.2 271.0 L179.7 271.0 L180.2 271.0 L180.7 271.0 L181.2 271.0 L181.7 271.0 L182.2 271.0 L182.7 271.0 L183.2 271.0 L183.7 271.0 L184.2 271.0 L184.6 271.0 L185.1 271.0 L185.6 271.0 L186.1 271.0 L186.6 271.0 L187.1 271.0 L187.6 271.0 L188.1 271.0 L188.6 271.0 L189.1 271.0 L189.6 271.0 L190.1 271.0 L190.6 271.0 L191.1 271.0 L191.6 271.0 L192.1 271.0 L192.6 271.0 L193.1 271.0 L193.6 271.0 L194.1 271.0 L194.6 271.0 L195.1 271.0 L195.6 271.0 L196.1 271.0 L196.6 271.0 L197.1 271.0 L197.6 271.0 L198.1 271.0 L198.6 271.0 L199.1 271.0 L199.6 271.0 L200.0 271.0 L200.5 271.0 L201.0 271.0 L201.5 271.0 L202.0 271.0 L202.5 271.0 L203.0 271.0 L203.5 271.0 L204.0 271.0 L204.5 271.0 L205.0 271.0 L205.5 271.0 L206.0 271.0 L206.5 271.0 L207.0 271.0 L207.5 271.0 L208.0 271.0 L208.5 271.0 L209.0 271.0 L209.5 271.0 L210.0 271.0 L210.5 271.0 L211.0 271.0 L211.5 271.0 L212.0 271.0 L212.5 271.0 L213.0 271.0 L213.5 271.0 L214.0 271.0 L214.5 271.0 L215.0 271.0 L215.5 271.0 L215.9 271.0 L216.4 271.0 L216.9 271.0 L217.4 271.0 L217.9 271.0 L218.4 271.0 L218.9 271.0 L219.4 271.0 L219.9 271.0 L220.4 271.0 L220.9 271.0 L221.4 271.0 L221.9 271.0 L222.4 271.0 L222.9 271.0 L223.4 271.0 L223.9 271.0 L224.4 271.0 L224.9 271.0 L225.4 271.0 L225.9 271.0 L226.4 271.0 L226.9 271.0 L227.4 271.0 L227.9 271.0 L228.4 271.0 L228.9 271.0 L229.4 271.0 L229.9 271.0 L230.4 271.0 L230.9 271.0 L231.3 271.0 L231.8 271.0 L232.3 271.0 L232.8 271.0 L233.3 271.0 L233.8 271.0 L234.3 271.0 L234.8 271.0 L235.3 271.0 L235.8 271.0 L236.3 271.0 L236.8 271.0 L237.3 271.0 L237.8 271.0 L238.3 271.0 L238.8 271.0 L239.3 271.0 L239.8 271.0 L240.3 271.0 L240.8 271.0 L241.3 271.0 L241.8 271.0 L242.3 271.0 L242.8 271.0 L243.3 271.0 L243.8 271.0 L244.3 271.0 L244.8 271.0 L245.3 271.0 L245.8 271.0 L246.3 271.0 L246.7 271.0 L247.2 271.0 L247.7 271.0 L248.2 271.0 L248.7 271.0 L249.2 271.0 L249.7 271.0 L250.2 271.0 L250.7 271.0 L251.2 271.0 L251.7 271.0 L252.2 271.0 L252.7 271.0 L253.2 271.0 L253.7 271.0 L254.2 271.0 L254.7 271.0 L255.2 271.0 L255.7 271.0 L256.2 271.0 L256.7 271.0 L257.2 271.0 L257.7 271.0 L258.2 271.0 L258.7 271.0 L259.2 271.0 L259.7 271.0 L260.2 271.0 L260.7 271.0 L261.2 271.0 L261.7 271.0 L262.1 271.0 L262.6 271.0 L263.1 271.0 L263.6 271.0 L264.1 271.0 L264.6 271.0 L265.1 271.0 L265.6 271.0 L266.1 271.0 L266.6 271.0 L267.1 271.0 L267.6 271.0 L268.1 271.0 L268.6 271.0 L269.1 271.0 L269.6 271.0 L270.1 271.0 L270.6 271.0 L271.1 271.0 L271.6 271.0 L272.1 271.0 L272.6 271.0 L273.1 271.0 L273.6 271.0 L274.1 271.0 L274.6 271.0 L275.1 271.0 L275.6 271.0 L276.1 271.0 L276.6 271.0 L277.1 271.0 L277.6 271.0 L278.0 271.0 L278.5 271.0 L279.0 271.0 L279.5 271.0 L280.0 271.0 L280.5 271.0 L281.0 271.0 L281.5 271.0 L282.0 271.0 L282.5 271.0 L283.0 271.0 L283.5 271.0 L284.0 271.0 L284.5 271.0 L285.0 271.0 L285.5 271.0 L286.0 271.0 L286.5 271.0 L287.0 271.0 L287.5 271.0 L288.0 271.0 L288.5 271.0 L289.0 271.0 L289.5 271.0 L290.0 271.0 L290.5 271.0 L291.0 271.0 L291.5 271.0 L292.0 271.0 L292.5 271.0 L293.0 271.0 L293.4 271.0 L293.9 271.0 L294.4 271.0 L294.9 271.0 L295.4 271.0 L295.9 271.0 L296.4 271.0 L296.9 271.0 L297.4 271.0 L297.9 271.0 L298.4 271.0 L298.9 271.0 L299.4 271.0 L299.9 271.0 L300.4 271.0 L300.9 271.0 L301.4 271.0 L301.9 271.0 L302.4 271.0 L302.9 271.0 L303.4 271.0 L303.9 271.0 L304.4 271.0 L304.9 271.0 L305.4 271.0 L305.9 271.0 L306.4 271.0 L306.9 271.0 L307.4 271.0 L307.9 271.0 L308.4 271.0 L308.8 271.0 L309.3 271.0 L309.8 271.0 L310.3 271.0 L310.8 271.0 L311.3 271.0 L311.8 271.0 L312.3 271.0 L312.8 271.0 L313.3 271.0 L313.8 271.0 L314.3 271.0 L314.8 271.0 L315.3 271.0 L315.8 271.0 L316.3 271.0 L316.8 271.0 L317.3 271.0 L317.8 271.0 L318.3 271.0 L318.8 271.0 L319.3 271.0 L319.8 271.0 L320.3 271.0 L320.8 271.0 L321.3 271.0 L321.8 271.0 L322.3 271.0 L322.8 271.0 L323.3 271.0 L323.8 271.0 L324.2 271.0 L324.7 271.0 L325.2 271.0 L325.7 271.0 L326.2 271.0 L326.7 271.0 L327.2 271.0 L327.7 271.0 L328.2 271.0 L328.7 271.0 L329.2 271.0 L329.7 271.0 L330.2 271.0 L330.7 271.0 L331.2 271.0 L331.7 271.0 L332.2 271.0 L332.7 271.0 L333.2 271.0 L333.7 271.0 L334.2 271.0 L334.7 271.0 L335.2 271.0 L335.7 271.0 L336.2 271.0 L336.7 271.0 L337.2 271.0 L337.7 271.0 L338.2 271.0 L338.7 271.0 L339.2 271.0 L339.7 271.0 L340.1 271.0 L340.6 271.0 L341.1 271.0 L341.6 271.0 L342.1 271.0 L342.6 271.0 L343.1 271.0 L343.6 271.0 L344.1 271.0 L344.6 271.0 L345.1 271.0 L345.6 271.0 L346.1 271.0 L346.6 271.0 L347.1 271.0 L347.6 271.0 L348.1 271.0 L348.6 271.0 L349.1 271.0 L349.6 271.0 L350.1 271.0 L350.6 271.0 L351.1 271.0 L351.6 271.0 L352.1 271.0 L352.6 271.0 L353.1 271.0 L353.6 271.0 L354.1 271.0 L354.6 271.0 L355.1 271.0 L355.5 271.0 L356.0 271.0 L356.5 271.0 L357.0 271.0 L357.5 271.0 L358.0 271.0 L358.5 271.0 L359.0 271.0 L359.5 271.0 L360.0 271.0 L360.5 271.0 L361.0 271.0 L361.5 271.0 L362.0 271.0 L362.5 271.0 L363.0 271.0 L363.5 271.0 L364.0 271.0 L364.5 271.0 L365.0 271.0 L365.5 271.0 L366.0 271.0 L366.5 271.0 L367.0 271.0 L367.5 271.0 L368.0 271.0 L368.5 271.0 L369.0 271.0 L369.5 271.0 L370.0 271.0 L370.5 271.0 L370.9 271.0 L371.4 271.0 L371.9 271.0 L372.4 271.0 L372.9 271.0 L373.4 271.0 L373.9 271.0 L374.4 271.0 L374.9 271.0 L375.4 271.0 L375.9 271.0 L376.4 271.0 L376.9 271.0 L377.4 271.0 L377.9 271.0 L378.4 271.0 L378.9 271.0 L379.4 271.0 L379.9 271.0 L380.4 271.0 L380.9 271.0 L381.4 271.0 L381.9 271.0 L382.4 271.0 L382.9 271.0 L383.4 271.0 L383.9 271.0 L384.4 271.0 L384.9 271.0 L385.4 271.0 L385.9 271.0 L386.3 271.0 L386.8 271.0 L387.3 271.0 L387.8 271.0 L388.3 271.0 L388.8 271.0 L389.3 271.0 L389.8 271.0 L390.3 271.0 L390.8 271.0 L391.3 271.0 L391.8 271.0 L392.3 271.0 L392.8 271.0 L393.3 271.0 L393.8 271.0 L394.3 271.0 L394.8 271.0 L395.3 271.0 L395.8 271.0 L396.3 271.0 L396.8 271.0 L397.3 271.0 L397.8 271.0 L398.3 271.0 L398.8 271.0 L399.3 271.0 L399.8 271.0 L400.3 271.0 L400.8 271.0 L401.3 271.0 L401.8 271.0 L402.2 271.0 L402.7 271.0 L403.2 271.0 L403.7 271.0 L404.2 271.0 L404.7 271.0 L405.2 271.0 L405.7 271.0 L406.2 271.0 L406.7 271.0 L407.2 271.0 L407.7 271.0 L408.2 271.0 L408.7 271.0 L409.2 271.0 L409.7 271.0 L410.2 271.0 L410.7 271.0 L411.2 271.0 L411.7 271.0 L412.2 271.0 L412.7 271.0 L413.2 271.0 L413.7 271.0 L414.2 271.0 L414.7 271.0 L415.2 271.0 L415.7 271.0 L416.2 271.0 L416.7 271.0 L417.2 271.0 L417.6 271.0 L418.1 271.0 L418.6 271.0 L419.1 271.0 L419.6 271.0 L420.1 271.0 L420.6 271.0 L421.1 271.0 L421.6 271.0 L422.1 271.0 L422.6 271.0 L423.1 271.0 L423.6 271.0 L424.1 271.0 L424.6 271.0 L425.1 271.0 L425.6 271.0 L426.1 271.0 L426.6 271.0 L427.1 271.0 L427.6 271.0 L428.1 271.0 L428.6 271.0 L429.1 271.0 L429.6 271.0 L430.1 271.0 L430.6 271.0 L431.1 271.0 L431.6 271.0 L432.1 271.0 L432.6 271.0 L433.0 271.0 L433.5 271.0 L434.0 271.0 L434.5 271.0 L435.0 271.0 L435.5 271.0 L436.0 271.0 L436.5 271.0 L437.0 271.0 L437.5 271.0 L438.0 271.0 L438.5 271.0 L439.0 271.0 L439.5 271.0 L440.0 271.0 L440.5 271.0 L441.0 271.0 L441.5 271.0 L442.0 271.0 L442.5 271.0 L443.0 271.0 L443.5 271.0 L444.0 271.0 L444.5 271.0 L445.0 271.0 L445.5 271.0 L446.0 271.0 L446.5 271.0 L447.0 271.0 L447.5 271.0 L448.0 271.0 L448.4 271.0 L448.9 271.0 L449.4 271.0 L449.9 271.0 L450.4 271.0 L450.9 271.0 L451.4 271.0 L451.9 271.0 L452.4 271.0 L452.9 271.0 L453.4 271.0 L453.9 271.0 L454.4 271.0 L454.9 271.0 L455.4 271.0 L455.9 271.0 L456.4 271.0 L456.9 271.0 L457.4 271.0 L457.9 271.0 L458.4 271.0 L458.9 271.0 L459.4 271.0 L459.9 271.0 L460.4 271.0 L460.9 271.0 L461.4 271.0 L461.9 271.0 L462.4 271.0 L462.9 271.0 L463.4 271.0 L463.9 271.0 L464.3 271.0 L464.8 271.0 L465.3 271.0 L465.8 271.0 L466.3 271.0 L466.8 271.0 L467.3 271.0 L467.8 271.0 L468.3 271.0 L468.8 271.0 L469.3 271.0 L469.8 271.0 L470.3 271.0 L470.8 271.0 L471.3 271.0 L471.8 271.0 L472.3 271.0 L472.8 271.0 L473.3 271.0 L473.8 271.0 L474.3 271.0 L474.8 271.0 L475.3 271.0 L475.8 271.0 L476.3 271.0 L476.8 271.0 L477.3 271.0 L477.8 271.0 L478.3 271.0 L478.8 271.0 L479.3 271.0 L479.7 271.0 L480.2 271.0 L480.7 271.0 L481.2 271.0 L481.7 271.0 L482.2 271.0 L482.7 271.0 L483.2 271.0 L483.7 271.0 L484.2 271.0 L484.7 271.0 L485.2 271.0 L485.7 271.0 L486.2 271.0 L486.7 271.0 L487.2 271.0 L487.7 271.0 L488.2 271.0 L488.7 271.0 L489.2 271.0 L489.7 271.0 L490.2 271.0 L490.7 271.0 L491.2 271.0 L491.7 271.0 L492.2 271.0 L492.7 271.0 L493.2 271.0 L493.7 271.0 L494.2 271.0 L494.7 271.0 L495.1 271.0 L495.6 271.0 L496.1 271.0 L496.6 271.0 L497.1 271.0 L497.6 271.0 L498.1 271.0 L498.6 271.0 L499.1 271.0 L499.6 271.0 L500.1 271.0 L500.6 271.0 L501.1 271.0 L501.6 271.0 L502.1 271.0 L502.6 271.0 L503.1 271.0 L503.6 271.0 L504.1 271.0 L504.6 271.0 L505.1 271.0 L505.6 271.0 L506.1 271.0 L506.6 271.0 L507.1 271.0 L507.6 271.0 L508.1 271.0 L508.6 271.0 L509.1 271.0 L509.6 271.0 L510.1 271.0 L510.5 271.0 L511.0 271.0 L511.5 271.0 L512.0 271.0 L512.5 271.0 L513.0 271.0 L513.5 271.0 L514.0 271.0 L514.5 271.0 L515.0 271.0 L515.5 271.0 L516.0 271.0 L516.5 271.0 L517.0 271.0 L517.5 271.0 L518.0 271.0 L518.5 271.0 L519.0 271.0 L519.5 271.0 L520.0 271.0 L520.5 271.0 L521.0 271.0 L521.5 271.0 L522.0 271.0 L522.5 271.0 L523.0 271.0 L523.5 271.0 L524.0 271.0 L524.5 271.0 L525.0 271.0 L525.5 271.0 L526.0 271.0 L526.4 271.0 L526.9 271.0 L527.4 271.0 L527.9 271.0 L528.4 271.0 L528.9 271.0 L529.4 271.0 L529.9 271.0 L530.4 271.0 L530.9 271.0 L531.4 271.0 L531.9 271.0 L532.4 271.0 L532.9 271.0 L533.4 271.0 L533.9 271.0 L534.4 271.0 L534.9 271.0 L535.4 271.0 L535.9 271.0 L536.4 271.0 L536.9 271.0 L537.4 271.0 L537.9 271.0 L538.4 271.0 L538.9 271.0 L539.4 271.0 L539.9 271.0 L540.4 271.0 L540.9 271.0 L541.4 271.0 L541.8 271.0 L542.3 271.0 L542.8 271.0 L543.3 271.0 L543.8 271.0 L544.3 271.0 L544.8 271.0 L545.3 271.0 L545.8 271.0 L546.3 271.0 L546.8 271.0 L547.3 271.0 L547.8 271.0 L548.3 271.0 L548.8 271.0 L549.3 271.0 L549.8 271.0 L550.3 271.0 L550.8 271.0 L551.3 271.0 L551.8 271.0 L552.3 271.0 L552.8 271.0 L553.3 271.0 L553.8 271.0 L554.3 271.0 L554.8 271.0 L555.3 271.0 L555.8 271.0 L556.3 271.0 L556.8 271.0 L557.2 271.0 L557.7 271.0 L558.2 271.0 L558.7 271.0 L559.2 271.0 L559.7 271.0 L560.2 271.0 L560.7 271.0 L561.2 271.0 L561.7 271.0 L562.2 271.0 L562.7 271.0 L563.2 271.0 L563.7 271.0 L564.2 271.0 L564.7 271.0 L565.2 271.0 L565.7 271.0 L566.2 271.0 L566.7 271.0 L567.2 271.0 L567.7 271.0 L568.2 271.0 L568.7 271.0 L569.2 271.0 L569.7 271.0 L570.2 271.0 L570.7 271.0 L571.2 271.0 L571.7 271.0 L572.2 271.0 L572.6 271.0 L573.1 271.0 L573.6 271.0 L574.1 271.0 L574.6 271.0 L575.1 271.0 L575.6 271.0 L576.1 271.0 L576.6 271.0 L577.1 271.0 L577.6 271.0 L578.1 271.0 L578.6 271.0 L579.1 271.0 L579.6 271.0 L580.1 271.0 L580.6 271.0 L581.1 271.0 L581.6 271.0 L582.1 271.0 L582.6 271.0 L583.1 271.0 L583.6 271.0 L584.1 271.0 L584.6 271.0 L585.1 271.0 L585.6 271.0 L586.1 271.0 L586.6 271.0 L587.1 271.0 L587.6 271.0 L588.1 271.0 L588.5 271.0 L589.0 271.0 L589.5 271.0 L590.0 271.0 L590.5 271.0 L591.0 271.0 L591.5 271.0" stroke="#FF0000" stroke-width="1" fill="none"/><path d="M52.5 271.0 L53.0 271.0 L53.5 271.0 L54.0 271.0 L54.5 271.0 L55.0 271.0 L55.5 271.0 L56.0 271.0 L56.5 271.0 L57.0 271.0 L57.5 271.0 L58.0 271.0 L58.5 271.0 L59.0 271.0 L59.5 271.0 L60.0 271.0 L60.4 271.0 L60.9 271.0 L61.4 271.0 L61.9 271.0 L62.4 271.0 L62.9 271.0 L63.4 271.0 L63.9 271.0 L64.4 271.0 L64.9 271.0 L65.4 271.0 L65.9 271.0 L66.4 271.0 L66.9 271.0 L67.4 271.0 L67.9 271.0 L68.4 271.0 L68.9 271.0 L69.4 271.0 L69.9 271.0 L70.4 271.0 L70.9 271.0 L71.4 271.0 L71.9 271.0 L72.4 271.0 L72.9 271.0 L73.4 271.0 L73.9 271.0 L74.4 271.0 L74.9 271.0 L75.4 271.0 L75.8 271.0 L76.3 271.0 L76.8 271.0 L77.3 271.0 L77.8 271.0 L78.3 271.0 L78.8 271.0 L79.3 271.0 L79.8 271.0 L80.3 271.0 L80.8 271.0 L81.3 271.0 L81.8 271.0 L82.3 271.0 L82.8 271.0 L83.3 271.0 L83.8 271.0 L84.3 271.0 L84.8 271.0 L85.3 271.0 L85.8 271.0 L86.3 271.0 L86.8 271.0 L87.3 271.0 L87.8 271.0 L88.3 271.0 L88.8 271.0 L89.3 271.0 L89.8 271.0 L90.3 271.0 L90.8 271.0 L91.3 271.0 L91.7 271.0 L92.2 271.0 L92.7 271.0 L93.2 271.0 L93.7 271.0 L94.2 271.0 L94.7 271.0 L95.2 271.0 L95.7 271.0 L96.2 271.0 L96.7 271.0 L97.2 271.0 L97.7 271.0 L98.2 271.0 L98.7 271.0 L99.2 271.0 L99.7 271.0 L100.2 271.0 L100.7 271.0 L101.2 271.0 L101.7 271.0 L102.2 271.0 L102.7 271.0 L103.2 271.0 L103.7 271.0 L104.2 271.0 L104.7 271.0 L105.2 271.0 L105.7 271.0 L106.2 271.0 L106.7 272.0 L107.1 275.5 L107.6 278.9 L108.1 282.2 L108.6 285.5 L109.1 288.7 L109.6 291.9 L110.1 294.9 L110.6 297.7 L111.1 300.5 L111.6 303.0 L112.1 305.4 L112.6 307.6 L113.1 309.6 L113.6 311.4 L114.1 312.9 L114.6 314.2 L115.1 315.3 L115.6 316.2 L116.1 316.8 L116.6 317.1 L117.1 317.2 L117.6 315.1 L118.1 311.2 L118.6 307.2 L119.1 302.9 L119.6 298.5 L120.1 293.9 L120.6 289.2 L121.1 284.4 L121.6 279.5 L122.1 274.6 L122.5 269.7 L123.0 262.4 L123.5 254.1 L124.0 245.9 L124.5 237.8 L125.0 230.0 L125.5 222.3 L126.0 215.0 L126.5 207.9 L127.0 201.2 L127.5 194.9 L128.0 189.0 L128.5 183.6 L129.0 178.7 L129.5 174.3 L130.0 170.4 L130.5 167.1 L131.0 164.3 L131.5 162.2 L132.0 160.6 L132.5 159.7 L133.0 159.4 L133.5 159.7 L134.0 163.8 L134.5 168.8 L135.0 174.3 L135.5 180.3 L136.0 186.8 L136.5 193.8 L137.0 201.2 L137.5 209.0 L137.9 217.2 L138.4 225.6 L138.9 234.2 L139.4 243.1 L139.9 252.1 L140.4 261.2 L140.9 270.4 L141.4 279.3 L141.9 288.2 L142.4 297.0 L142.9 305.6 L143.4 314.0 L143.9 322.2 L144.4 330.1 L144.9 337.7 L145.4 344.8 L145.9 351.6 L146.4 357.9 L146.9 363.7 L147.4 369.0 L147.9 373.8 L148.4 377.9 L148.9 381.5 L149.4 383.0 L149.9 383.0 L150.4 383.0 L150.9 383.0 L151.4 383.0 L151.9 383.0 L152.4 383.0 L152.9 383.0 L153.4 383.0 L153.8 381.9 L154.3 378.4 L154.8 374.3 L155.3 369.7 L155.8 364.5 L156.3 358.7 L156.8 352.6 L157.3 345.9 L157.8 338.9 L158.3 331.4 L158.8 323.7 L159.3 315.6 L159.8 307.4 L160.3 298.9 L160.8 290.3 L161.3 281.6 L161.8 272.8 L162.3 264.0 L162.8 255.3 L163.3 246.7 L163.8 238.2 L164.3 229.9 L164.8 221.8 L165.3 214.0 L165.8 206.6 L166.3 199.5 L166.8 192.8 L167.3 186.6 L167.8 180.8 L168.3 175.5 L168.8 170.8 L169.2 166.6 L169.7 163.0 L170.2 160.0 L170.7 159.0 L171.2 159.0 L171.7 159.0 L172.2 159.0 L172.7 159.0 L173.2 159.0 L173.7 159.0 L174.2 159.1 L174.7 161.8 L175.2 165.1 L175.7 169.1 L176.2 173.6 L176.7 178.6 L177.2 184.1 L177.7 190.1 L178.2 196.6 L178.7 203.5 L179.2 210.7 L179.7 218.3 L180.2 226.1 L180.7 234.2 L181.2 242.5 L181.7 250.9 L182.2 259.5 L182.7 268.1 L183.2 276.7 L183.7 285.3 L184.2 293.7 L184.6 302.1 L185.1 310.3 L185.6 318.2 L186.1 325.9 L186.6 333.2 L187.1 340.2 L187.6 346.9 L188.1 353.0 L188.6 358.8 L189.1 364.0 L189.6 368.7 L190.1 372.9 L190.6 376.5 L191.1 379.5 L191.6 381.9 L192.1 383.0 L192.6 383.0 L193.1 383.0 L193.6 383.0 L194.1 383.0 L194.6 383.0 L195.1 381.1 L195.6 378.5 L196.1 375.3 L196.6 371.6 L197.1 367.2 L197.6 362.4 L198.1 357.0 L198.6 351.2 L199.1 344.9 L199.6 338.2 L200.0 331.1 L200.5 323.8 L201.0 316.1 L201.5 308.2 L202.0 300.1 L202.5 291.8 L203.0 283.4 L203.5 275.0 L204.0 266.6 L204.5 258.2 L205.0 249.8 L205.5 241.6 L206.0 233.6 L206.5 225.7 L207.0 218.2 L207.5 210.9 L208.0 204.0 L208.5 197.4 L209.0 191.3 L209.5 185.6 L210.0 180.4 L210.5 175.7 L211.0 171.6 L211.5 167.9 L212.0 164.9 L212.5 162.5 L213.0 160.6 L213.5 159.4 L214.0 159.0 L214.5 159.0 L215.0 159.5 L215.5 160.8 L215.9 162.6 L216.4 165.1 L216.9 168.2 L217.4 171.8 L217.9 176.0 L218.4 180.7 L218.9 185.9 L219.4 191.6 L219.9 197.7 L220.4 204.2 L220.9 211.0 L221.4 218.2 L221.9 225.7 L222.4 233.5 L222.9 241.4 L223.4 249.5 L223.9 257.7 L224.4 265.9 L224.9 274.2 L225.4 282.5 L225.9 290.7 L226.4 298.8 L226.9 306.7 L227.4 314.4 L227.9 321.8 L228.4 329.0 L228.9 335.8 L229.4 342.3 L229.9 348.4 L230.4 354.0 L230.9 359.2 L231.3 363.9 L231.8 368.0 L232.3 371.7 L232.8 374.7 L233.3 377.2 L233.8 379.1 L234.3 380.3 L234.8 381.0 L235.3 381.1 L235.8 380.5 L236.3 379.4 L236.8 377.6 L237.3 375.2 L237.8 372.3 L238.3 368.8 L238.8 364.8 L239.3 360.3 L239.8 355.2 L240.3 349.7 L240.8 343.8 L241.3 337.5 L241.8 330.8 L242.3 323.7 L242.8 316.4 L243.3 308.9 L243.8 301.1 L244.3 293.2 L244.8 285.2 L245.3 277.1 L245.8 268.9 L246.3 260.8 L246.7 252.8 L247.2 244.8 L247.7 237.0 L248.2 229.5 L248.7 222.1 L249.2 215.0 L249.7 208.3 L250.2 201.9 L250.7 195.8 L251.2 190.3 L251.7 185.1 L252.2 180.5 L252.7 176.3 L253.2 172.7 L253.7 169.6 L254.2 167.1 L254.7 165.2 L255.2 163.9 L255.7 163.1 L256.2 163.0 L256.7 163.4 L257.2 164.5 L257.7 166.2 L258.2 168.4 L258.7 171.2 L259.2 174.5 L259.7 178.4 L260.2 182.8 L260.7 187.7 L261.2 193.0 L261.7 198.8 L262.1 204.9 L262.6 211.5 L263.1 218.3 L263.6 225.4 L264.1 232.8 L264.6 240.4 L265.1 248.2 L265.6 256.0 L266.1 264.0 L266.6 271.9 L267.1 279.9 L267.6 287.8 L268.1 295.6 L268.6 303.3 L269.1 310.8 L269.6 318.0 L270.1 325.0 L270.6 331.7 L271.1 338.0 L271.6 344.0 L272.1 349.5 L272.6 354.6 L273.1 359.2 L273.6 363.4 L274.1 367.0 L274.6 370.1 L275.1 372.6 L275.6 374.6 L276.1 376.0 L276.6 376.8 L277.1 377.0 L277.6 376.6 L278.0 375.7 L278.5 374.1 L279.0 372.0 L279.5 369.3 L280.0 366.1 L280.5 362.4 L281.0 358.1 L281.5 353.4 L282.0 348.2 L282.5 342.6 L283.0 336.6 L283.5 330.3 L284.0 323.6 L284.5 316.7 L285.0 309.4 L285.5 302.0 L286.0 294.4 L286.5 286.7 L287.0 279.0 L287.5 271.1 L288.0 263.3 L288.5 255.5 L289.0 247.9 L289.5 240.3 L290.0 233.0 L290.5 225.8 L291.0 218.9 L291.5 212.3 L292.0 206.1 L292.5 200.2 L293.0 194.7 L293.4 189.6 L293.9 185.0 L294.4 180.9 L294.9 177.3 L295.4 174.2 L295.9 171.6 L296.4 169.6 L296.9 168.2 L297.4 167.3 L297.9 167.0 L298.4 167.3 L298.9 168.2 L299.4 169.6 L299.9 171.6 L300.4 174.1 L300.9 177.2 L301.4 180.8 L301.9 184.9 L302.4 189.5 L302.9 194.5 L303.4 199.9 L303.9 205.8 L304.4 212.0 L304.9 218.5 L305.4 225.3 L305.9 232.3 L306.4 239.6 L306.9 247.0 L307.4 254.5 L307.9 262.2 L308.4 269.8 L308.8 277.5 L309.3 285.1 L309.8 292.7 L310.3 300.1 L310.8 307.3 L311.3 314.4 L311.8 321.2 L312.3 327.7 L312.8 333.9 L313.3 339.7 L313.8 345.2 L314.3 350.2 L314.8 354.8 L315.3 358.9 L315.8 362.5 L316.3 365.6 L316.8 368.2 L317.3 370.2 L317.8 371.7 L318.3 372.7 L318.8 373.0 L319.3 372.8 L319.8 372.0 L320.3 370.7 L320.8 368.8 L321.3 366.4 L321.8 363.4 L322.3 360.0 L322.8 356.0 L323.3 351.6 L323.8 346.7 L324.2 341.5 L324.7 335.8 L325.2 329.8 L325.7 323.4 L326.2 316.8 L326.7 309.9 L327.2 302.8 L327.7 295.6 L328.2 288.2 L328.7 280.7 L329.2 273.2 L329.7 265.6 L330.2 258.1 L330.7 250.7 L331.2 243.4 L331.7 236.3 L332.2 229.4 L332.7 222.7 L333.2 216.2 L333.7 210.1 L334.2 204.3 L334.7 199.0 L335.2 194.0 L335.7 189.4 L336.2 185.3 L336.7 181.7 L337.2 178.6 L337.7 176.0 L338.2 173.9 L338.7 172.3 L339.2 171.4 L339.7 170.9 L340.1 171.1 L340.6 171.7 L341.1 173.0 L341.6 174.7 L342.1 177.1 L342.6 179.9 L343.1 183.2 L343.6 187.0 L344.1 191.3 L344.6 196.0 L345.1 201.2 L345.6 206.7 L346.1 212.5 L346.6 218.7 L347.1 225.2 L347.6 231.9 L348.1 238.8 L348.6 245.9 L349.1 253.2 L349.6 260.5 L350.1 267.9 L350.6 275.3 L351.1 282.6 L351.6 289.9 L352.1 297.1 L352.6 304.1 L353.1 310.9 L353.6 317.6 L354.1 323.9 L354.6 329.9 L355.1 335.6 L355.5 341.0 L356.0 345.9 L356.5 350.5 L357.0 354.6 L357.5 358.2 L358.0 361.3 L358.5 363.9 L359.0 366.0 L359.5 367.6 L360.0 368.7 L360.5 369.2 L361.0 369.1 L361.5 368.5 L362.0 367.4 L362.5 365.7 L363.0 363.5 L363.5 360.8 L364.0 357.6 L364.5 353.9 L365.0 349.8 L365.5 345.2 L366.0 340.2 L366.5 334.9 L367.0 329.2 L367.5 323.1 L368.0 316.8 L368.5 310.3 L369.0 303.5 L369.5 296.5 L370.0 289.5 L370.5 282.3 L370.9 275.0 L371.4 267.8 L371.9 260.6 L372.4 253.4 L372.9 246.4 L373.4 239.4 L373.9 232.7 L374.4 226.2 L374.9 219.9 L375.4 214.0 L375.9 208.3 L376.4 203.0 L376.9 198.1 L377.4 193.6 L377.9 189.5 L378.4 185.9 L378.9 182.8 L379.4 180.1 L379.9 178.0 L380.4 176.4 L380.9 175.3 L381.4 174.7 L381.9 174.7 L382.4 175.2 L382.9 176.3 L383.4 177.8 L383.9 179.9 L384.4 182.5 L384.9 185.6 L385.4 189.1 L385.9 193.1 L386.3 197.6 L386.8 202.4 L387.3 207.6 L387.8 213.2 L388.3 219.0 L388.8 225.2 L389.3 231.6 L389.8 238.2 L390.3 245.0 L390.8 251.9 L391.3 259.0 L391.8 266.1 L392.3 273.2 L392.8 280.3 L393.3 287.3 L393.8 294.2 L394.3 301.1 L394.8 307.7 L395.3 314.1 L395.8 320.3 L396.3 326.2 L396.8 331.8 L397.3 337.0 L397.8 341.9 L398.3 346.4 L398.8 350.4 L399.3 354.0 L399.8 357.2 L400.3 359.8 L400.8 362.0 L401.3 363.6 L401.8 364.8 L402.2 365.4 L402.7 365.5 L403.2 365.1 L403.7 364.1 L404.2 362.6 L404.7 360.7 L405.2 358.2 L405.7 355.2 L406.2 351.8 L406.7 348.0 L407.2 343.7 L407.7 339.0 L408.2 333.9 L408.7 328.5 L409.2 322.8 L409.7 316.8 L410.2 310.5 L410.7 304.1 L411.2 297.4 L411.7 290.6 L412.2 283.7 L412.7 276.8 L413.2 269.8 L413.7 262.8 L414.2 255.9 L414.7 249.1 L415.2 242.4 L415.7 235.9 L416.2 229.5 L416.7 223.5 L417.2 217.6 L417.6 212.1 L418.1 206.9 L418.6 202.1 L419.1 197.6 L419.6 193.6 L420.1 190.0 L420.6 186.9 L421.1 184.2 L421.6 182.0 L422.1 180.3 L422.6 179.1 L423.1 178.4 L423.6 178.3 L424.1 178.6 L424.6 179.5 L425.1 180.9 L425.6 182.7 L426.1 185.1 L426.6 187.9 L427.1 191.2 L427.6 195.0 L428.1 199.1 L428.6 203.7 L429.1 208.6 L429.6 213.8 L430.1 219.4 L430.6 225.3 L431.1 231.4 L431.6 237.7 L432.1 244.2 L432.6 250.8 L433.0 257.6 L433.5 264.4 L434.0 271.2 L434.5 278.1 L435.0 284.9 L435.5 291.6 L436.0 298.2 L436.5 304.6 L437.0 310.8 L437.5 316.9 L438.0 322.6 L438.5 328.1 L439.0 333.2 L439.5 338.0 L440.0 342.4 L440.5 346.4 L441.0 350.0 L441.5 353.2 L442.0 355.8 L442.5 358.1 L443.0 359.8 L443.5 361.0 L444.0 361.7 L444.5 362.0 L445.0 361.7 L445.5 360.9 L446.0 359.6 L446.5 357.9 L447.0 355.6 L447.5 352.9 L448.0 349.7 L448.4 346.1 L448.9 342.1 L449.4 337.7 L449.9 332.9 L450.4 327.8 L450.9 322.4 L451.4 316.7 L451.9 310.7 L452.4 304.5 L452.9 298.2 L453.4 291.7 L453.9 285.1 L454.4 278.4 L454.9 271.7 L455.4 265.0 L455.9 258.3 L456.4 251.7 L456.9 245.2 L457.4 238.9 L457.9 232.7 L458.4 226.8 L458.9 221.1 L459.4 215.7 L459.9 210.6 L460.4 205.9 L460.9 201.5 L461.4 197.5 L461.9 193.9 L462.4 190.8 L462.9 188.1 L463.4 185.9 L463.9 184.1 L464.3 182.8 L464.8 182.0 L465.3 181.7 L465.8 182.0 L466.3 182.7 L466.8 183.8 L467.3 185.5 L467.8 187.7 L468.3 190.3 L468.8 193.3 L469.3 196.8 L469.8 200.7 L470.3 205.0 L470.8 209.6 L471.3 214.6 L471.8 219.9 L472.3 225.4 L472.8 231.3 L473.3 237.3 L473.8 243.5 L474.3 249.8 L474.8 256.3 L475.3 262.9 L475.8 269.4 L476.3 276.0 L476.8 282.6 L477.3 289.1 L477.8 295.4 L478.3 301.7 L478.8 307.7 L479.3 313.6 L479.7 319.2 L480.2 324.5 L480.7 329.6 L481.2 334.3 L481.7 338.6 L482.2 342.6 L482.7 346.1 L483.2 349.3 L483.7 352.0 L484.2 354.3 L484.7 356.1 L485.2 357.4 L485.7 358.2 L486.2 358.6 L486.7 358.4 L487.2 357.8 L487.7 356.7 L488.2 355.1 L488.7 353.1 L489.2 350.6 L489.7 347.6 L490.2 344.3 L490.7 340.5 L491.2 336.4 L491.7 331.9 L492.2 327.0 L492.7 321.9 L493.2 316.5 L493.7 310.8 L494.2 304.9 L494.7 298.8 L495.1 292.6 L495.6 286.3 L496.1 279.9 L496.6 273.4 L497.1 266.9 L497.6 260.5 L498.1 254.1 L498.6 247.9 L499.1 241.7 L499.6 235.7 L500.1 230.0 L500.6 224.4 L501.1 219.2 L501.6 214.2 L502.1 209.5 L502.6 205.2 L503.1 201.3 L503.6 197.7 L504.1 194.6 L504.6 191.9 L505.1 189.6 L505.6 187.8 L506.1 186.4 L506.6 185.5 L507.1 185.1 L507.6 185.2 L508.1 185.7 L508.6 186.7 L509.1 188.2 L509.6 190.2 L510.1 192.6 L510.5 195.4 L511.0 198.6 L511.5 202.3 L512.0 206.3 L512.5 210.7 L513.0 215.4 L513.5 220.4 L514.0 225.7 L514.5 231.2 L515.0 237.0 L515.5 242.9 L516.0 249.0 L516.5 255.2 L517.0 261.5 L517.5 267.8 L518.0 274.1 L518.5 280.4 L519.0 286.7 L519.5 292.9 L520.0 298.9 L520.5 304.8 L521.0 310.5 L521.5 316.0 L522.0 321.2 L522.5 326.1 L523.0 330.7 L523.5 335.0 L524.0 338.9 L524.5 342.4 L525.0 345.6 L525.5 348.3 L526.0 350.6 L526.4 352.4 L526.9 353.8 L527.4 354.8 L527.9 355.2 L528.4 355.2 L528.9 354.8 L529.4 353.8 L529.9 352.4 L530.4 350.6 L530.9 348.3 L531.4 345.6 L531.9 342.5 L532.4 338.9 L532.9 335.0 L533.4 330.8 L533.9 326.2 L534.4 321.3 L534.9 316.2 L535.4 310.8 L535.9 305.2 L536.4 299.4 L536.9 293.4 L537.4 287.4 L537.9 281.2 L538.4 275.0 L538.9 268.8 L539.4 262.6 L539.9 256.4 L540.4 250.3 L540.9 244.4 L541.4 238.6 L541.8 233.0 L542.3 227.6 L542.8 222.5 L543.3 217.6 L543.8 213.0 L544.3 208.8 L544.8 204.9 L545.3 201.4 L545.8 198.2 L546.3 195.5 L546.8 193.2 L547.3 191.3 L547.8 189.9 L548.3 188.9 L548.8 188.4 L549.3 188.3 L549.8 188.7 L550.3 189.6 L550.8 190.9 L551.3 192.7 L551.8 194.8 L552.3 197.4 L552.8 200.5 L553.3 203.9 L553.8 207.6 L554.3 211.8 L554.8 216.2 L555.3 220.9 L555.8 226.0 L556.3 231.2 L556.8 236.7 L557.2 242.4 L557.7 248.2 L558.2 254.1 L558.7 260.2 L559.2 266.3 L559.7 272.4 L560.2 278.5 L560.7 284.5 L561.2 290.5 L561.7 296.3 L562.2 302.0 L562.7 307.5 L563.2 312.9 L563.7 318.0 L564.2 322.8 L564.7 327.3 L565.2 331.5 L565.7 335.4 L566.2 338.9 L566.7 342.0 L567.2 344.7 L567.7 347.1 L568.2 349.0 L568.7 350.4 L569.2 351.4 L569.7 352.0 L570.2 352.1 L570.7 351.8 L571.2 351.0 L571.7 349.8 L572.2 348.1 L572.6 346.0 L573.1 343.5 L573.6 340.6 L574.1 337.3 L574.6 333.7 L575.1 329.7 L575.6 325.4 L576.1 320.8 L576.6 315.9 L577.1 310.7 L577.6 305.4 L578.1 299.8 L578.6 294.2 L579.1 288.3 L579.6 282.4 L580.1 276.5 L580.6 270.5 L581.1 264.5 L581.6 258.6 L582.1 252.7 L582.6 246.9 L583.1 241.3 L583.6 235.9 L584.1 230.6 L584.6 225.6 L585.1 220.8 L585.6 216.4 L586.1 212.2 L586.6 208.3 L587.1 204.8 L587.6 201.7 L588.1 199.0 L588.5 196.7 L589.0 194.8 L589.5 193.3 L590.0 192.2 L590.5 191.6 L591.0 191.4 L591.5 191.7" stroke="#00FF00" stroke-width="1" fill="none"/><path d="M52.5 271.0 L53.0 271.0 L53.5 271.0 L54.0 271.0 L54.5 271.0 L55.0 271.0 L55.5 271.0 L56.0 271.0 L56.5 271.0 L57.0 271.0 L57.5 271.0 L58.0 271.0 L58.5 271.0 L59.0 271.0 L59.5 271.0 L60.0 271.0 L60.4 271.0 L60.9 271.0 L61.4 271.0 L61.9 271.0 L62.4 271.0 L62.9 271.0 L63.4 271.0 L63.9 271.0 L64.4 271.0 L64.9 271.0 L65.4 271.0 L65.9 271.0 L66.4 271.0 L66.9 271.0 L67.4 271.0 L67.9 271.0 L68.4 271.0 L68.9 271.0 L69.4 271.0 L69.9 271.0 L70.4 271.0 L70.9 271.0 L71.4 271.0 L71.9 271.0 L72.4 271.0 L72.9 271.0 L73.4 271.0 L73.9 271.0 L74.4 271.0 L74.9 271.0 L75.4 271.0 L75.8 271.0 L76.3 271.0 L76.8 271.0 L77.3 271.0 L77.8 271.0 L78.3 271.0 L78.8 271.0 L79.3 271.0 L79.8 271.0 L80.3 271.0 L80.8 271.0 L81.3 271.0 L81.8 271.0 L82.3 271.0 L82.8 271.0 L83.3 271.0 L83.8 271.0 L84.3 271.0 L84.8 271.0 L85.3 271.0 L85.8 271.0 L86.3 271.0 L86.8 271.0 L87.3 271.0 L87.8 271.0 L88.3 271.0 L88.8 271.0 L89.3 271.0 L89.8 271.0 L90.3 271.0 L90.8 271.0 L91.3 271.0 L91.7 271.0 L92.2 271.0 L92.7 271.0 L93.2 271.0 L93.7 271.0 L94.2 271.0 L94.7 271.0 L95.2 271.0 L95.7 271.0 L96.2 271.0 L96.7 271.0 L97.2 271.0 L97.7 271.0 L98.2 271.0 L98.7 271.0 L99.2 271.0 L99.7 271.0 L100.2 271.0 L100.7 271.0 L101.2 271.0 L101.7 271.0 L102.2 271.0 L102.7 271.0 L103.2 271.0 L103.7 271.0 L104.2 271.0 L104.7 271.0 L105.2 271.0 L105.7 271.0 L106.2 271.0 L106.7 271.0 L107.1 271.0 L107.6 271.0 L108.1 271.1 L108.6 271.1 L109.1 271.2 L109.6 271.4 L110.1 271.6 L110.6 271.9 L111.1 272.2 L111.6 272.7 L112.1 273.2 L112.6 273.8 L113.1 274.6 L113.6 275.4 L114.1 276.3 L114.6 277.4 L115.1 278.6 L115.6 279.9 L116.1 281.3 L116.6 282.8 L117.1 284.5 L117.6 286.3 L118.1 288.2 L118.6 290.2 L119.1 292.4 L119.6 294.6 L120.1 296.9 L120.6 299.2 L121.1 301.6 L121.6 304.1 L122.1 306.5 L122.5 309.0 L123.0 311.5 L123.5 313.9 L124.0 316.3 L124.5 318.6 L125.0 320.8 L125.5 322.9 L126.0 324.9 L126.5 326.7 L127.0 328.3 L127.5 329.7 L128.0 330.9 L128.5 331.9 L129.0 332.7 L129.5 333.2 L130.0 333.4 L130.5 333.3 L131.0 333.0 L131.5 332.4 L132.0 331.4 L132.5 330.2 L133.0 328.6 L133.5 326.7 L134.0 324.6 L134.5 322.1 L135.0 319.4 L135.5 316.3 L136.0 313.1 L136.5 309.6 L137.0 305.9 L137.5 302.0 L137.9 297.9 L138.4 293.7 L138.9 289.4 L139.4 284.9 L139.9 280.4 L140.4 275.9 L140.9 271.3 L141.4 266.8 L141.9 262.4 L142.4 258.0 L142.9 253.7 L143.4 249.5 L143.9 245.4 L144.4 241.4 L144.9 237.7 L145.4 234.1 L145.9 230.7 L146.4 227.6 L146.9 224.6 L147.4 222.0 L147.9 219.6 L148.4 217.5 L148.9 215.7 L149.4 214.3 L149.9 213.1 L150.4 212.3 L150.9 211.8 L151.4 211.6 L151.9 211.7 L152.4 212.2 L152.9 213.0 L153.4 214.1 L153.8 215.6 L154.3 217.3 L154.8 219.3 L155.3 221.7 L155.8 224.3 L156.3 227.1 L156.8 230.2 L157.3 233.5 L157.8 237.1 L158.3 240.8 L158.8 244.7 L159.3 248.7 L159.8 252.8 L160.3 257.1 L160.8 261.4 L161.3 265.7 L161.8 270.1 L162.3 274.5 L162.8 278.9 L163.3 283.2 L163.8 287.4 L164.3 291.6 L164.8 295.6 L165.3 299.5 L165.8 303.2 L166.3 306.8 L166.8 310.1 L167.3 313.2 L167.8 316.1 L168.3 318.7 L168.8 321.1 L169.2 323.2 L169.7 325.0 L170.2 326.5 L170.7 327.7 L171.2 328.5 L171.7 329.1 L172.2 329.3 L172.7 329.2 L173.2 328.8 L173.7 328.0 L174.2 327.0 L174.7 325.6 L175.2 323.9 L175.7 322.0 L176.2 319.7 L176.7 317.2 L177.2 314.4 L177.7 311.4 L178.2 308.2 L178.7 304.8 L179.2 301.1 L179.7 297.4 L180.2 293.4 L180.7 289.4 L181.2 285.3 L181.7 281.0 L182.2 276.8 L182.7 272.5 L183.2 268.2 L183.7 263.9 L184.2 259.6 L184.6 255.5 L185.1 251.4 L185.6 247.4 L186.1 243.6 L186.6 239.9 L187.1 236.4 L187.6 233.1 L188.1 230.0 L188.6 227.1 L189.1 224.5 L189.6 222.1 L190.1 220.1 L190.6 218.3 L191.1 216.7 L191.6 215.5 L192.1 214.7 L192.6 214.1 L193.1 213.8 L193.6 213.9 L194.1 214.2 L194.6 214.9 L195.1 215.9 L195.6 217.2 L196.1 218.8 L196.6 220.7 L197.1 222.9 L197.6 225.3 L198.1 228.0 L198.6 230.9 L199.1 234.1 L199.6 237.4 L200.0 240.9 L200.5 244.6 L201.0 248.5 L201.5 252.4 L202.0 256.5 L202.5 260.6 L203.0 264.8 L203.5 269.0 L204.0 273.2 L204.5 277.4 L205.0 281.6 L205.5 285.7 L206.0 289.7 L206.5 293.6 L207.0 297.4 L207.5 301.0 L208.0 304.5 L208.5 307.8 L209.0 310.8 L209.5 313.7 L210.0 316.3 L210.5 318.6 L211.0 320.7 L211.5 322.5 L212.0 324.0 L212.5 325.3 L213.0 326.2 L213.5 326.8 L214.0 327.1 L214.5 327.1 L215.0 326.8 L215.5 326.1 L215.9 325.2 L216.4 323.9 L216.9 322.4 L217.4 320.6 L217.9 318.5 L218.4 316.2 L218.9 313.6 L219.4 310.7 L219.9 307.7 L220.4 304.4 L220.9 301.0 L221.4 297.4 L221.9 293.6 L222.4 289.8 L222.9 285.8 L223.4 281.8 L223.9 277.7 L224.4 273.5 L224.9 269.4 L225.4 265.3 L225.9 261.2 L226.4 257.1 L226.9 253.2 L227.4 249.3 L227.9 245.6 L228.4 242.0 L228.9 238.6 L229.4 235.3 L229.9 232.3 L230.4 229.5 L230.9 226.9 L231.3 224.6 L231.8 222.5 L232.3 220.7 L232.8 219.1 L233.3 217.9 L233.8 217.0 L234.3 216.3 L234.8 216.0 L235.3 216.0 L235.8 216.2 L236.3 216.8 L236.8 217.7 L237.3 218.9 L237.8 220.3 L238.3 222.1 L238.8 224.1 L239.3 226.4 L239.8 228.9 L240.3 231.6 L240.8 234.6 L241.3 237.8 L241.8 241.1 L242.3 244.6 L242.8 248.3 L243.3 252.1 L243.8 255.9 L244.3 259.9 L244.8 263.9 L245.3 268.0 L245.8 272.0 L246.3 276.1 L246.7 280.1 L247.2 284.1 L247.7 288.0 L248.2 291.8 L248.7 295.4 L249.2 299.0 L249.7 302.4 L250.2 305.6 L250.7 308.6 L251.2 311.4 L251.7 313.9 L252.2 316.3 L252.7 318.3 L253.2 320.2 L253.7 321.7 L254.2 322.9 L254.7 323.9 L255.2 324.6 L255.7 324.9 L256.2 325.0 L256.7 324.8 L257.2 324.2 L257.7 323.4 L258.2 322.3 L258.7 320.9 L259.2 319.2 L259.7 317.3 L260.2 315.1 L260.7 312.7 L261.2 310.0 L261.7 307.1 L262.1 304.0 L262.6 300.8 L263.1 297.3 L263.6 293.8 L264.1 290.1 L264.6 286.3 L265.1 282.4 L265.6 278.5 L266.1 274.5 L266.6 270.5 L267.1 266.5 L267.6 262.6 L268.1 258.7 L268.6 254.9 L269.1 251.1 L269.6 247.5 L270.1 244.0 L270.6 240.7 L271.1 237.5 L271.6 234.5 L272.1 231.8 L272.6 229.2 L273.1 226.9 L273.6 224.8 L274.1 223.0 L274.6 221.5 L275.1 220.2 L275.6 219.2 L276.1 218.5 L276.6 218.1 L277.1 218.0 L277.6 218.2 L278.0 218.7 L278.5 219.4 L279.0 220.5 L279.5 221.8 L280.0 223.4 L280.5 225.3 L281.0 227.4 L281.5 229.8 L282.0 232.4 L282.5 235.2 L283.0 238.2 L283.5 241.4 L284.0 244.7 L284.5 248.2 L285.0 251.8 L285.5 255.5 L286.0 259.3 L286.5 263.1 L287.0 267.0 L287.5 270.9 L288.0 274.8 L288.5 278.7 L289.0 282.6 L289.5 286.3 L290.0 290.0 L290.5 293.6 L291.0 297.0 L291.5 300.3 L292.0 303.5 L292.5 306.4 L293.0 309.2 L293.4 311.7 L293.9 314.0 L294.4 316.1 L294.9 317.9 L295.4 319.4 L295.9 320.7 L296.4 321.7 L296.9 322.4 L297.4 322.8 L297.9 323.0 L298.4 322.9 L298.9 322.4 L299.4 321.7 L299.9 320.7 L300.4 319.4 L300.9 317.9 L301.4 316.1 L301.9 314.0 L302.4 311.8 L302.9 309.2 L303.4 306.5 L303.9 303.6 L304.4 300.5 L304.9 297.3 L305.4 293.9 L305.9 290.3 L306.4 286.7 L306.9 283.0 L307.4 279.2 L307.9 275.4 L308.4 271.6 L308.8 267.7 L309.3 263.9 L309.8 260.2 L310.3 256.5 L310.8 252.8 L311.3 249.3 L311.8 245.9 L312.3 242.7 L312.8 239.6 L313.3 236.6 L313.8 233.9 L314.3 231.4 L314.8 229.1 L315.3 227.1 L315.8 225.2 L316.3 223.7 L316.8 222.4 L317.3 221.4 L317.8 220.6 L318.3 220.2 L318.8 220.0 L319.3 220.1 L319.8 220.5 L320.3 221.1 L320.8 222.1 L321.3 223.3 L321.8 224.8 L322.3 226.5 L322.8 228.5 L323.3 230.7 L323.8 233.1 L324.2 235.8 L324.7 238.6 L325.2 241.6 L325.7 244.8 L326.2 248.1 L326.7 251.5 L327.2 255.1 L327.7 258.7 L328.2 262.4 L328.7 266.2 L329.2 269.9 L329.7 273.7 L330.2 277.4 L330.7 281.1 L331.2 284.8 L331.7 288.4 L332.2 291.8 L332.7 295.2 L333.2 298.4 L333.7 301.4 L334.2 304.3 L334.7 307.0 L335.2 309.5 L335.7 311.8 L336.2 313.8 L336.7 315.7 L337.2 317.2 L337.7 318.5 L338.2 319.6 L338.7 320.3 L339.2 320.8 L339.7 321.0 L340.1 321.0 L340.6 320.6 L341.1 320.0 L341.6 319.1 L342.1 318.0 L342.6 316.6 L343.1 314.9 L343.6 313.0 L344.1 310.8 L344.6 308.5 L345.1 305.9 L345.6 303.2 L346.1 300.2 L346.6 297.1 L347.1 293.9 L347.6 290.5 L348.1 287.1 L348.6 283.5 L349.1 279.9 L349.6 276.3 L350.1 272.6 L350.6 268.9 L351.1 265.2 L351.6 261.5 L352.1 258.0 L352.6 254.4 L353.1 251.0 L353.6 247.7 L354.1 244.6 L354.6 241.5 L355.1 238.7 L355.5 236.0 L356.0 233.5 L356.5 231.3 L357.0 229.2 L357.5 227.4 L358.0 225.8 L358.5 224.5 L359.0 223.5 L359.5 222.7 L360.0 222.2 L360.5 221.9 L361.0 221.9 L361.5 222.2 L362.0 222.8 L362.5 223.6 L363.0 224.7 L363.5 226.1 L364.0 227.7 L364.5 229.5 L365.0 231.6 L365.5 233.9 L366.0 236.4 L366.5 239.1 L367.0 241.9 L367.5 244.9 L368.0 248.1 L368.5 251.4 L369.0 254.8 L369.5 258.2 L370.0 261.8 L370.5 265.4 L370.9 269.0 L371.4 272.6 L371.9 276.2 L372.4 279.8 L372.9 283.3 L373.4 286.8 L373.9 290.1 L374.4 293.4 L374.9 296.5 L375.4 299.5 L375.9 302.3 L376.4 305.0 L376.9 307.4 L377.4 309.7 L377.9 311.7 L378.4 313.5 L378.9 315.1 L379.4 316.4 L379.9 317.5 L380.4 318.3 L380.9 318.9 L381.4 319.1 L381.9 319.1 L382.4 318.9 L382.9 318.4 L383.4 317.6 L383.9 316.5 L384.4 315.2 L384.9 313.7 L385.4 311.9 L385.9 309.9 L386.3 307.7 L386.8 305.3 L387.3 302.7 L387.8 299.9 L388.3 297.0 L388.8 293.9 L389.3 290.7 L389.8 287.4 L390.3 284.0 L390.8 280.5 L391.3 277.0 L391.8 273.5 L392.3 269.9 L392.8 266.4 L393.3 262.8 L393.8 259.4 L394.3 256.0 L394.8 252.7 L395.3 249.4 L395.8 246.4 L396.3 243.4 L396.8 240.6 L397.3 238.0 L397.8 235.6 L398.3 233.3 L398.8 231.3 L399.3 229.5 L399.8 227.9 L400.3 226.6 L400.8 225.5 L401.3 224.7 L401.8 224.1 L402.2 223.8 L402.7 223.8 L403.2 224.0 L403.7 224.4 L404.2 225.2 L404.7 226.2 L405.2 227.4 L405.7 228.9 L406.2 230.6 L406.7 232.5 L407.2 234.7 L407.7 237.0 L408.2 239.5 L408.7 242.2 L409.2 245.1 L409.7 248.1 L410.2 251.2 L410.7 254.5 L411.2 257.8 L411.7 261.2 L412.2 264.6 L412.7 268.1 L413.2 271.6 L413.7 275.1 L414.2 278.5 L414.7 281.9 L415.2 285.3 L415.7 288.6 L416.2 291.7 L416.7 294.8 L417.2 297.7 L417.6 300.4 L418.1 303.0 L418.6 305.5 L419.1 307.7 L419.6 309.7 L420.1 311.5 L420.6 313.1 L421.1 314.4 L421.6 315.5 L422.1 316.3 L422.6 316.9 L423.1 317.3 L423.6 317.4 L424.1 317.2 L424.6 316.8 L425.1 316.1 L425.6 315.1 L426.1 313.9 L426.6 312.5 L427.1 310.9 L427.6 309.0 L428.1 306.9 L428.6 304.7 L429.1 302.2 L429.6 299.6 L430.1 296.8 L430.6 293.9 L431.1 290.8 L431.6 287.7 L432.1 284.4 L432.6 281.1 L433.0 277.7 L433.5 274.3 L434.0 270.9 L434.5 267.5 L435.0 264.1 L435.5 260.7 L436.0 257.4 L436.5 254.2 L437.0 251.1 L437.5 248.1 L438.0 245.2 L438.5 242.5 L439.0 239.9 L439.5 237.5 L440.0 235.3 L440.5 233.3 L441.0 231.5 L441.5 229.9 L442.0 228.6 L442.5 227.5 L443.0 226.6 L443.5 226.0 L444.0 225.6 L444.5 225.5 L445.0 225.7 L445.5 226.0 L446.0 226.7 L446.5 227.6 L447.0 228.7 L447.5 230.1 L448.0 231.6 L448.4 233.4 L448.9 235.5 L449.4 237.7 L449.9 240.0 L450.4 242.6 L450.9 245.3 L451.4 248.2 L451.9 251.2 L452.4 254.2 L452.9 257.4 L453.4 260.7 L453.9 264.0 L454.4 267.3 L454.9 270.7 L455.4 274.0 L455.9 277.4 L456.4 280.7 L456.9 283.9 L457.4 287.1 L457.9 290.1 L458.4 293.1 L458.9 295.9 L459.4 298.6 L459.9 301.2 L460.4 303.6 L460.9 305.7 L461.4 307.7 L461.9 309.5 L462.4 311.1 L462.9 312.5 L463.4 313.6 L463.9 314.5 L464.3 315.1 L464.8 315.5 L465.3 315.6 L465.8 315.5 L466.3 315.2 L466.8 314.6 L467.3 313.7 L467.8 312.7 L468.3 311.4 L468.8 309.8 L469.3 308.1 L469.8 306.2 L470.3 304.0 L470.8 301.7 L471.3 299.2 L471.8 296.6 L472.3 293.8 L472.8 290.9 L473.3 287.9 L473.8 284.8 L474.3 281.6 L474.8 278.3 L475.3 275.1 L475.8 271.8 L476.3 268.5 L476.8 265.2 L477.3 262.0 L477.8 258.8 L478.3 255.7 L478.8 252.6 L479.3 249.7 L479.7 246.9 L480.2 244.2 L480.7 241.7 L481.2 239.4 L481.7 237.2 L482.2 235.2 L482.7 233.4 L483.2 231.9 L483.7 230.5 L484.2 229.4 L484.7 228.5 L485.2 227.8 L485.7 227.4 L486.2 227.2 L486.7 227.3 L487.2 227.6 L487.7 228.2 L488.2 228.9 L488.7 230.0 L489.2 231.2 L489.7 232.7 L490.2 234.4 L490.7 236.2 L491.2 238.3 L491.7 240.6 L492.2 243.0 L492.7 245.6 L493.2 248.3 L493.7 251.1 L494.2 254.1 L494.7 257.1 L495.1 260.2 L495.6 263.4 L496.1 266.6 L496.6 269.8 L497.1 273.0 L497.6 276.3 L498.1 279.4 L498.6 282.6 L499.1 285.6 L499.6 288.6 L500.1 291.5 L500.6 294.3 L501.1 296.9 L501.6 299.4 L502.1 301.7 L502.6 303.9 L503.1 305.9 L503.6 307.6 L504.1 309.2 L504.6 310.6 L505.1 311.7 L505.6 312.6 L506.1 313.3 L506.6 313.7 L507.1 313.9 L507.6 313.9 L508.1 313.6 L508.6 313.1 L509.1 312.4 L509.6 311.4 L510.1 310.2 L510.5 308.8 L511.0 307.2 L511.5 305.4 L512.0 303.4 L512.5 301.2 L513.0 298.8 L513.5 296.3 L514.0 293.7 L514.5 290.9 L515.0 288.0 L515.5 285.1 L516.0 282.0 L516.5 278.9 L517.0 275.8 L517.5 272.6 L518.0 269.4 L518.5 266.3 L519.0 263.1 L519.5 260.1 L520.0 257.0 L520.5 254.1 L521.0 251.3 L521.5 248.5 L522.0 245.9 L522.5 243.5 L523.0 241.1 L523.5 239.0 L524.0 237.0 L524.5 235.3 L525.0 233.7 L525.5 232.3 L526.0 231.2 L526.4 230.3 L526.9 229.6 L527.4 229.1 L527.9 228.9 L528.4 228.9 L528.9 229.1 L529.4 229.6 L529.9 230.3 L530.4 231.2 L530.9 232.4 L531.4 233.7 L531.9 235.3 L532.4 237.0 L532.9 239.0 L533.4 241.1 L533.9 243.4 L534.4 245.8 L534.9 248.4 L535.4 251.1 L535.9 253.9 L536.4 256.8 L536.9 259.8 L537.4 262.8 L537.9 265.9 L538.4 269.0 L538.9 272.1 L539.4 275.2 L539.9 278.3 L540.4 281.3 L540.9 284.3 L541.4 287.2 L541.8 290.0 L542.3 292.7 L542.8 295.3 L543.3 297.7 L543.8 300.0 L544.3 302.1 L544.8 304.1 L545.3 305.8 L545.8 307.4 L546.3 308.8 L546.8 309.9 L547.3 310.8 L547.8 311.6 L548.3 312.0 L548.8 312.3 L549.3 312.3 L549.8 312.1 L550.3 311.7 L550.8 311.0 L551.3 310.2 L551.8 309.1 L552.3 307.8 L552.8 306.3 L553.3 304.6 L553.8 302.7 L554.3 300.6 L554.8 298.4 L555.3 296.0 L555.8 293.5 L556.3 290.9 L556.8 288.1 L557.2 285.3 L557.7 282.4 L558.2 279.4 L558.7 276.4 L559.2 273.4 L559.7 270.3 L560.2 267.3 L560.7 264.3 L561.2 261.3 L561.7 258.3 L562.2 255.5 L562.7 252.7 L563.2 250.1 L563.7 247.5 L564.2 245.1 L564.7 242.9 L565.2 240.7 L565.7 238.8 L566.2 237.1 L566.7 235.5 L567.2 234.1 L567.7 233.0 L568.2 232.0 L568.7 231.3 L569.2 230.8 L569.7 230.5 L570.2 230.4 L570.7 230.6 L571.2 231.0 L571.7 231.6 L572.2 232.4 L572.6 233.5 L573.1 234.7 L573.6 236.2 L574.1 237.8 L574.6 239.7 L575.1 241.7 L575.6 243.8 L576.1 246.1 L576.6 248.6 L577.1 251.1 L577.6 253.8 L578.1 256.6 L578.6 259.4 L579.1 262.3 L579.6 265.3 L580.1 268.3 L580.6 271.3 L581.1 274.3 L581.6 277.2 L582.1 280.2 L582.6 283.0 L583.1 285.8 L583.6 288.6 L584.1 291.2 L584.6 293.7 L585.1 296.1 L585.6 298.3 L586.1 300.4 L586.6 302.3 L587.1 304.1 L587.6 305.6 L588.1 307.0 L588.5 308.2 L589.0 309.1 L589.5 309.9 L590.0 310.4 L590.5 310.7 L591.0 310.8 L591.5 310.7" stroke="#0000FF" stroke-width="1" fill="none"/><path d="M52.5 271.0 L53.0 271.0 L53.5 271.0 L54.0 271.0 L54.5 271.0 L55.0 271.0 L55.5 271.0 L56.0 271.0 L56.5 271.0 L57.0 271.0 L57.5 271.0 L58.0 271.0 L58.5 271.0 L59.0 271.0 L59.5 271.0 L60.0 271.0 L60.4 271.0 L60.9 271.0 L61.4 271.0 L61.9 271.0 L62.4 271.0 L62.9 271.0 L63.4 271.0 L63.9 271.0 L64.4 271.0 L64.9 271.0 L65.4 271.0 L65.9 271.0 L66.4 271.0 L66.9 271.0 L67.4 271.0 L67.9 271.0 L68.4 271.0 L68.9 271.0 L69.4 271.0 L69.9 271.0 L70.4 271.0 L70.9 271.0 L71.4 271.0 L71.9 271.0 L72.4 271.0 L72.9 271.0 L73.4 271.0 L73.9 271.0 L74.4 271.0 L74.9 271.0 L75.4 271.0 L75.8 271.0 L76.3 271.0 L76.8 271.0 L77.3 271.0 L77.8 271.0 L78.3 271.0 L78.8 271.0 L79.3 271.0 L79.8 271.0 L80.3 271.0 L80.8 271.0 L81.3 271.0 L81.8 271.0 L82.3 271.0 L82.8 271.0 L83.3 271.0 L83.8 271.0 L84.3 271.0 L84.8 271.0 L85.3 271.0 L85.8 271.0 L86.3 271.0 L86.8 271.0 L87.3 271.0 L87.8 271.0 L88.3 271.0 L88.8 271.0 L89.3 271.0 L89.8 271.0 L90.3 271.0 L90.8 271.0 L91.3 271.0 L91.7 271.0 L92.2 271.0 L92.7 271.0 L93.2 271.0 L93.7 271.0 L94.2 271.0 L94.7 271.0 L95.2 271.0 L95.7 271.0 L96.2 271.0 L96.7 271.0 L97.2 271.0 L97.7 271.0 L98.2 271.0 L98.7 271.0 L99.2 271.0 L99.7 271.0 L100.2 271.0 L100.7 271.0 L101.2 271.0 L101.7 271.0 L102.2 271.0 L102.7 271.0 L103.2 271.0 L103.7 271.0 L104.2 271.0 L104.7 271.0 L105.2 271.0 L105.7 271.0 L106.2 271.0 L106.7 271.0 L107.1 271.0 L107.6 271.0 L108.1 270.9 L108.6 270.9 L109.1 270.8 L109.6 270.6 L110.1 270.4 L110.6 270.1 L111.1 269.8 L111.6 269.3 L112.1 268.8 L112.6 268.2 L113.1 267.4 L113.6 266.6 L114.1 265.7 L114.6 264.6 L115.1 263.4 L115.6 262.1 L116.1 260.7 L116.6 259.2 L117.1 257.5 L117.6 255.7 L118.1 253.8 L118.6 251.8 L119.1 249.6 L119.6 247.4 L120.1 245.1 L120.6 242.8 L121.1 240.4 L121.6 237.9 L122.1 235.5 L122.5 233.0 L123.0 230.5 L123.5 228.1 L124.0 225.7 L124.5 223.4 L125.0 221.2 L125.5 219.1 L126.0 217.1 L126.5 215.3 L127.0 213.7 L127.5 212.3 L128.0 211.1 L128.5 210.1 L129.0 209.3 L129.5 208.8 L130.0 208.6 L130.5 208.7 L131.0 209.0 L131.5 209.6 L132.0 210.6 L132.5 211.8 L133.0 213.4 L133.5 215.3 L134.0 217.4 L134.5 219.9 L135.0 222.6 L135.5 225.7 L136.0 228.9 L136.5 232.4 L137.0 236.1 L137.5 240.0 L137.9 244.1 L138.4 248.3 L138.9 252.6 L139.4 257.1 L139.9 261.6 L140.4 266.1 L140.9 270.7 L141.4 275.2 L141.9 279.6 L142.4 284.0 L142.9 288.3 L143.4 292.5 L143.9 296.6 L144.4 300.6 L144.9 304.3 L145.4 307.9 L145.9 311.3 L146.4 314.4 L146.9 317.4 L147.4 320.0 L147.9 322.4 L148.4 324.5 L148.9 326.3 L149.4 327.7 L149.9 328.9 L150.4 329.7 L150.9 330.2 L151.4 330.4 L151.9 330.3 L152.4 329.8 L152.9 329.0 L153.4 327.9 L153.8 326.4 L154.3 324.7 L154.8 322.7 L155.3 320.3 L155.8 317.7 L156.3 314.9 L156.8 311.8 L157.3 308.5 L157.8 304.9 L158.3 301.2 L158.8 297.3 L159.3 293.3 L159.8 289.2 L160.3 284.9 L160.8 280.6 L161.3 276.3 L161.8 271.9 L162.3 267.5 L162.8 263.1 L163.3 258.8 L163.8 254.6 L164.3 250.4 L164.8 246.4 L165.3 242.5 L165.8 238.8 L166.3 235.2 L166.8 231.9 L167.3 228.8 L167.8 225.9 L168.3 223.3 L168.8 220.9 L169.2 218.8 L169.7 217.0 L170.2 215.5 L170.7 214.3 L171.2 213.5 L171.7 212.9 L172.2 212.7 L172.7 212.8 L173.2 213.2 L173.7 214.0 L174.2 215.0 L174.7 216.4 L175.2 218.1 L175.7 220.0 L176.2 222.3 L176.7 224.8 L177.2 227.6 L177.7 230.6 L178.2 233.8 L178.7 237.2 L179.2 240.9 L179.7 244.6 L180.2 248.6 L180.7 252.6 L181.2 256.7 L181.7 261.0 L182.2 265.2 L182.7 269.5 L183.2 273.8 L183.7 278.1 L184.2 282.4 L184.6 286.5 L185.1 290.6 L185.6 294.6 L186.1 298.4 L186.6 302.1 L187.1 305.6 L187.6 308.9 L188.1 312.0 L188.6 314.9 L189.1 317.5 L189.6 319.9 L190.1 321.9 L190.6 323.7 L191.1 325.3 L191.6 326.5 L192.1 327.3 L192.6 327.9 L193.1 328.2 L193.6 328.1 L194.1 327.8 L194.6 327.1 L195.1 326.1 L195.6 324.8 L196.1 323.2 L196.6 321.3 L197.1 319.1 L197.6 316.7 L198.1 314.0 L198.6 311.1 L199.1 307.9 L199.6 304.6 L200.0 301.1 L200.5 297.4 L201.0 293.5 L201.5 289.6 L202.0 285.5 L202.5 281.4 L203.0 277.2 L203.5 273.0 L204.0 268.8 L204.5 264.6 L205.0 260.4 L205.5 256.3 L206.0 252.3 L206.5 248.4 L207.0 244.6 L207.5 241.0 L208.0 237.5 L208.5 234.2 L209.0 231.2 L209.5 228.3 L210.0 225.7 L210.5 223.4 L211.0 221.3 L211.5 219.5 L212.0 218.0 L212.5 216.7 L213.0 215.8 L213.5 215.2 L214.0 214.9 L214.5 214.9 L215.0 215.2 L215.5 215.9 L215.9 216.8 L216.4 218.1 L216.9 219.6 L217.4 221.4 L217.9 223.5 L218.4 225.8 L218.9 228.4 L219.4 231.3 L219.9 234.3 L220.4 237.6 L220.9 241.0 L221.4 244.6 L221.9 248.4 L222.4 252.2 L222.9 256.2 L223.4 260.2 L223.9 264.3 L224.4 268.5 L224.9 272.6 L225.4 276.7 L225.9 280.8 L226.4 284.9 L226.9 288.8 L227.4 292.7 L227.9 296.4 L228.4 300.0 L228.9 303.4 L229.4 306.7 L229.9 309.7 L230.4 312.5 L230.9 315.1 L231.3 317.4 L231.8 319.5 L232.3 321.3 L232.8 322.9 L233.3 324.1 L233.8 325.0 L234.3 325.7 L234.8 326.0 L235.3 326.0 L235.8 325.8 L236.3 325.2 L236.8 324.3 L237.3 323.1 L237.8 321.7 L238.3 319.9 L238.8 317.9 L239.3 315.6 L239.8 313.1 L240.3 310.4 L240.8 307.4 L241.3 304.2 L241.8 300.9 L242.3 297.4 L242.8 293.7 L243.3 289.9 L243.8 286.1 L244.3 282.1 L244.8 278.1 L245.3 274.0 L245.8 270.0 L246.3 265.9 L246.7 261.9 L247.2 257.9 L247.7 254.0 L248.2 250.2 L248.7 246.6 L249.2 243.0 L249.7 239.6 L250.2 236.4 L250.7 233.4 L251.2 230.6 L251.7 228.1 L252.2 225.7 L252.7 223.7 L253.2 221.8 L253.7 220.3 L254.2 219.1 L254.7 218.1 L255.2 217.4 L255.7 217.1 L256.2 217.0 L256.7 217.2 L257.2 217.8 L257.7 218.6 L258.2 219.7 L258.7 221.1 L259.2 222.8 L259.7 224.7 L260.2 226.9 L260.7 229.3 L261.2 232.0 L261.7 234.9 L262.1 238.0 L262.6 241.2 L263.1 244.7 L263.6 248.2 L264.1 251.9 L264.6 255.7 L265.1 259.6 L265.6 263.5 L266.1 267.5 L266.6 271.5 L267.1 275.5 L267.6 279.4 L268.1 283.3 L268.6 287.1 L269.1 290.9 L269.6 294.5 L270.1 298.0 L270.6 301.3 L271.1 304.5 L271.6 307.5 L272.1 310.2 L272.6 312.8 L273.1 315.1 L273.6 317.2 L274.1 319.0 L274.6 320.5 L275.1 321.8 L275.6 322.8 L276.1 323.5 L276.6 323.9 L277.1 324.0 L277.6 323.8 L278.0 323.3 L278.5 322.6 L279.0 321.5 L279.5 320.2 L280.0 318.6 L280.5 316.7 L281.0 314.6 L281.5 312.2 L282.0 309.6 L282.5 306.8 L283.0 303.8 L283.5 300.6 L284.0 297.3 L284.5 293.8 L285.0 290.2 L285.5 286.5 L286.0 282.7 L286.5 278.9 L287.0 275.0 L287.5 271.1 L288.0 267.2 L288.5 263.3 L289.0 259.4 L289.5 255.7 L290.0 252.0 L290.5 248.4 L291.0 245.0 L291.5 241.7 L292.0 238.5 L292.5 235.6 L293.0 232.8 L293.4 230.3 L293.9 228.0 L294.4 225.9 L294.9 224.1 L295.4 222.6 L295.9 221.3 L296.4 220.3 L296.9 219.6 L297.4 219.2 L297.9 219.0 L298.4 219.1 L298.9 219.6 L299.4 220.3 L299.9 221.3 L300.4 222.6 L300.9 224.1 L301.4 225.9 L301.9 228.0 L302.4 230.2 L302.9 232.8 L303.4 235.5 L303.9 238.4 L304.4 241.5 L304.9 244.7 L305.4 248.1 L305.9 251.7 L306.4 255.3 L306.9 259.0 L307.4 262.8 L307.9 266.6 L308.4 270.4 L308.8 274.3 L309.3 278.1 L309.8 281.8 L310.3 285.5 L310.8 289.2 L311.3 292.7 L311.8 296.1 L312.3 299.3 L312.8 302.4 L313.3 305.4 L313.8 308.1 L314.3 310.6 L314.8 312.9 L315.3 314.9 L315.8 316.8 L316.3 318.3 L316.8 319.6 L317.3 320.6 L317.8 321.4 L318.3 321.8 L318.8 322.0 L319.3 321.9 L319.8 321.5 L320.3 320.9 L320.8 319.9 L321.3 318.7 L321.8 317.2 L322.3 315.5 L322.8 313.5 L323.3 311.3 L323.8 308.9 L324.2 306.2 L324.7 303.4 L325.2 300.4 L325.7 297.2 L326.2 293.9 L326.7 290.5 L327.2 286.9 L327.7 283.3 L328.2 279.6 L328.7 275.8 L329.2 272.1 L329.7 268.3 L330.2 264.6 L330.7 260.9 L331.2 257.2 L331.7 253.6 L332.2 250.2 L332.7 246.8 L333.2 243.6 L333.7 240.6 L334.2 237.7 L334.7 235.0 L335.2 232.5 L335.7 230.2 L336.2 228.2 L336.7 226.3 L337.2 224.8 L337.7 223.5 L338.2 222.4 L338.7 221.7 L339.2 221.2 L339.7 221.0 L340.1 221.0 L340.6 221.4 L341.1 222.0 L341.6 222.9 L342.1 224.0 L342.6 225.4 L343.1 227.1 L343.6 229.0 L344.1 231.2 L344.6 233.5 L345.1 236.1 L345.6 238.8 L346.1 241.8 L346.6 244.9 L347.1 248.1 L347.6 251.5 L348.1 254.9 L348.6 258.5 L349.1 262.1 L349.6 265.7 L350.1 269.4 L350.6 273.1 L351.1 276.8 L351.6 280.5 L352.1 284.0 L352.6 287.6 L353.1 291.0 L353.6 294.3 L354.1 297.4 L354.6 300.5 L355.1 303.3 L355.5 306.0 L356.0 308.5 L356.5 310.7 L357.0 312.8 L357.5 314.6 L358.0 316.2 L358.5 317.5 L359.0 318.5 L359.5 319.3 L360.0 319.8 L360.5 320.1 L361.0 320.1 L361.5 319.8 L362.0 319.2 L362.5 318.4 L363.0 317.3 L363.5 315.9 L364.0 314.3 L364.5 312.5 L365.0 310.4 L365.5 308.1 L366.0 305.6 L366.5 302.9 L367.0 300.1 L367.5 297.1 L368.0 293.9 L368.5 290.6 L369.0 287.2 L369.5 283.8 L370.0 280.2 L370.5 276.6 L370.9 273.0 L371.4 269.4 L371.9 265.8 L372.4 262.2 L372.9 258.7 L373.4 255.2 L373.9 251.9 L374.4 248.6 L374.9 245.5 L375.4 242.5 L375.9 239.7 L376.4 237.0 L376.9 234.6 L377.4 232.3 L377.9 230.3 L378.4 228.5 L378.9 226.9 L379.4 225.6 L379.9 224.5 L380.4 223.7 L380.9 223.1 L381.4 222.9 L381.9 222.9 L382.4 223.1 L382.9 223.6 L383.4 224.4 L383.9 225.5 L384.4 226.8 L384.9 228.3 L385.4 230.1 L385.9 232.1 L386.3 234.3 L386.8 236.7 L387.3 239.3 L387.8 242.1 L388.3 245.0 L388.8 248.1 L389.3 251.3 L389.8 254.6 L390.3 258.0 L390.8 261.5 L391.3 265.0 L391.8 268.5 L392.3 272.1 L392.8 275.6 L393.3 279.2 L393.8 282.6 L394.3 286.0 L394.8 289.3 L395.3 292.6 L395.8 295.6 L396.3 298.6 L396.8 301.4 L397.3 304.0 L397.8 306.4 L398.3 308.7 L398.8 310.7 L399.3 312.5 L399.8 314.1 L400.3 315.4 L400.8 316.5 L401.3 317.3 L401.8 317.9 L402.2 318.2 L402.7 318.2 L403.2 318.0 L403.7 317.6 L404.2 316.8 L404.7 315.8 L405.2 314.6 L405.7 313.1 L406.2 311.4 L406.7 309.5 L407.2 307.3 L407.7 305.0 L408.2 302.5 L408.7 299.8 L409.2 296.9 L409.7 293.9 L410.2 290.8 L410.7 287.5 L411.2 284.2 L411.7 280.8 L412.2 277.4 L412.7 273.9 L413.2 270.4 L413.7 266.9 L414.2 263.5 L414.7 260.1 L415.2 256.7 L415.7 253.4 L416.2 250.3 L416.7 247.2 L417.2 244.3 L417.6 241.6 L418.1 239.0 L418.6 236.5 L419.1 234.3 L419.6 232.3 L420.1 230.5 L420.6 228.9 L421.1 227.6 L421.6 226.5 L422.1 225.7 L422.6 225.1 L423.1 224.7 L423.6 224.6 L424.1 224.8 L424.6 225.2 L425.1 225.9 L425.6 226.9 L426.1 228.1 L426.6 229.5 L427.1 231.1 L427.6 233.0 L428.1 235.1 L428.6 237.3 L429.1 239.8 L429.6 242.4 L430.1 245.2 L430.6 248.1 L431.1 251.2 L431.6 254.3 L432.1 257.6 L432.6 260.9 L433.0 264.3 L433.5 267.7 L434.0 271.1 L434.5 274.5 L435.0 277.9 L435.5 281.3 L436.0 284.6 L436.5 287.8 L437.0 290.9 L437.5 293.9 L438.0 296.8 L438.5 299.5 L439.0 302.1 L439.5 304.5 L440.0 306.7 L440.5 308.7 L441.0 310.5 L441.5 312.1 L442.0 313.4 L442.5 314.5 L443.0 315.4 L443.5 316.0 L444.0 316.4 L444.5 316.5 L445.0 316.3 L445.5 316.0 L446.0 315.3 L446.5 314.4 L447.0 313.3 L447.5 311.9 L448.0 310.4 L448.4 308.6 L448.9 306.5 L449.4 304.3 L449.9 302.0 L450.4 299.4 L450.9 296.7 L451.4 293.8 L451.9 290.8 L452.4 287.8 L452.9 284.6 L453.4 281.3 L453.9 278.0 L454.4 274.7 L454.9 271.3 L455.4 268.0 L455.9 264.6 L456.4 261.3 L456.9 258.1 L457.4 254.9 L457.9 251.9 L458.4 248.9 L458.9 246.1 L459.4 243.4 L459.9 240.8 L460.4 238.4 L460.9 236.3 L461.4 234.3 L461.9 232.5 L462.4 230.9 L462.9 229.5 L463.4 228.4 L463.9 227.5 L464.3 226.9 L464.8 226.5 L465.3 226.4 L465.8 226.5 L466.3 226.8 L466.8 227.4 L467.3 228.3 L467.8 229.3 L468.3 230.6 L468.8 232.2 L469.3 233.9 L469.8 235.8 L470.3 238.0 L470.8 240.3 L471.3 242.8 L471.8 245.4 L472.3 248.2 L472.8 251.1 L473.3 254.1 L473.8 257.2 L474.3 260.4 L474.8 263.7 L475.3 266.9 L475.8 270.2 L476.3 273.5 L476.8 276.8 L477.3 280.0 L477.8 283.2 L478.3 286.3 L478.8 289.4 L479.3 292.3 L479.7 295.1 L480.2 297.8 L480.7 300.3 L481.2 302.6 L481.7 304.8 L482.2 306.8 L482.7 308.6 L483.2 310.1 L483.7 311.5 L484.2 312.6 L484.7 313.5 L485.2 314.2 L485.7 314.6 L486.2 314.8 L486.7 314.7 L487.2 314.4 L487.7 313.8 L488.2 313.1 L488.7 312.0 L489.2 310.8 L489.7 309.3 L490.2 307.6 L490.7 305.8 L491.2 303.7 L491.7 301.4 L492.2 299.0 L492.7 296.4 L493.2 293.7 L493.7 290.9 L494.2 287.9 L494.7 284.9 L495.1 281.8 L495.6 278.6 L496.1 275.4 L496.6 272.2 L497.1 269.0 L497.6 265.7 L498.1 262.6 L498.6 259.4 L499.1 256.4 L499.6 253.4 L500.1 250.5 L500.6 247.7 L501.1 245.1 L501.6 242.6 L502.1 240.3 L502.6 238.1 L503.1 236.1 L503.6 234.4 L504.1 232.8 L504.6 231.4 L505.1 230.3 L505.6 229.4 L506.1 228.7 L506.6 228.3 L507.1 228.1 L507.6 228.1 L508.1 228.4 L508.6 228.9 L509.1 229.6 L509.6 230.6 L510.1 231.8 L510.5 233.2 L511.0 234.8 L511.5 236.6 L512.0 238.6 L512.5 240.8 L513.0 243.2 L513.5 245.7 L514.0 248.3 L514.5 251.1 L515.0 254.0 L515.5 256.9 L516.0 260.0 L516.5 263.1 L517.0 266.2 L517.5 269.4 L518.0 272.6 L518.5 275.7 L519.0 278.9 L519.5 281.9 L520.0 285.0 L520.5 287.9 L521.0 290.7 L521.5 293.5 L522.0 296.1 L522.5 298.5 L523.0 300.9 L523.5 303.0 L524.0 305.0 L524.5 306.7 L525.0 308.3 L525.5 309.7 L526.0 310.8 L526.4 311.7 L526.9 312.4 L527.4 312.9 L527.9 313.1 L528.4 313.1 L528.9 312.9 L529.4 312.4 L529.9 311.7 L530.4 310.8 L530.9 309.6 L531.4 308.3 L531.9 306.7 L532.4 305.0 L532.9 303.0 L533.4 300.9 L533.9 298.6 L534.4 296.2 L534.9 293.6 L535.4 290.9 L535.9 288.1 L536.4 285.2 L536.9 282.2 L537.4 279.2 L537.9 276.1 L538.4 273.0 L538.9 269.9 L539.4 266.8 L539.9 263.7 L540.4 260.7 L540.9 257.7 L541.4 254.8 L541.8 252.0 L542.3 249.3 L542.8 246.7 L543.3 244.3 L543.8 242.0 L544.3 239.9 L544.8 237.9 L545.3 236.2 L545.8 234.6 L546.3 233.2 L546.8 232.1 L547.3 231.2 L547.8 230.4 L548.3 230.0 L548.8 229.7 L549.3 229.7 L549.8 229.9 L550.3 230.3 L550.8 231.0 L551.3 231.8 L551.8 232.9 L552.3 234.2 L552.8 235.7 L553.3 237.4 L553.8 239.3 L554.3 241.4 L554.8 243.6 L555.3 246.0 L555.8 248.5 L556.3 251.1 L556.8 253.9 L557.2 256.7 L557.7 259.6 L558.2 262.6 L558.7 265.6 L559.2 268.6 L559.7 271.7 L560.2 274.7 L560.7 277.7 L561.2 280.7 L561.7 283.7 L562.2 286.5 L562.7 289.3 L563.2 291.9 L563.7 294.5 L564.2 296.9 L564.7 299.1 L565.2 301.3 L565.7 303.2 L566.2 304.9 L566.7 306.5 L567.2 307.9 L567.7 309.0 L568.2 310.0 L568.7 310.7 L569.2 311.2 L569.7 311.5 L570.2 311.6 L570.7 311.4 L571.2 311.0 L571.7 310.4 L572.2 309.6 L572.6 308.5 L573.1 307.3 L573.6 305.8 L574.1 304.2 L574.6 302.3 L575.1 300.3 L575.6 298.2 L576.1 295.9 L576.6 293.4 L577.1 290.9 L577.6 288.2 L578.1 285.4 L578.6 282.6 L579.1 279.7 L579.6 276.7 L580.1 273.7 L580.6 270.7 L581.1 267.7 L581.6 264.8 L582.1 261.8 L582.6 259.0 L583.1 256.2 L583.6 253.4 L584.1 250.8 L584.6 248.3 L585.1 245.9 L585.6 243.7 L586.1 241.6 L586.6 239.7 L587.1 237.9 L587.6 236.4 L588.1 235.0 L588.5 233.8 L589.0 232.9 L589.5 232.1 L590.0 231.6 L590.5 231.3 L591.0 231.2 L591.5 231.3" stroke="#00B0B8" stroke-width="1" fill="none"/></svg>
</div>
<div style="left:670px;top:145px;width:1px;height:59px;background:#0000FF;"></div>
<div style="left:670px;top:145px;width:191px;height:1px;background:#0000FF;"></div>
<div style="left:860px;top:145px;width:1px;height:113px;background:#0000FF;"></div>
<div style="left:670px;top:244px;width:1px;height:81px;background:#0000FF;"></div>
<div style="left:670px;top:324px;width:286px;height:1px;background:#0000FF;"></div>
<div style="left:955px;top:293px;width:1px;height:32px;background:#0000FF;"></div>
<div style="left:744px;top:293px;width:1px;height:32px;background:#0000FF;"></div>
<div style="left:744px;top:187px;width:1px;height:54px;background:#0000FF;"></div>
<div style="left:797px;top:187px;width:106px;height:1px;background:#0000FF;"></div>
<div style="left:955px;top:187px;width:1px;height:54px;background:#0000FF;"></div>
<div style="left:860px;top:265px;width:1px;height:71px;background:#0000FF;"></div>
<div style="left:857px;top:184px;width:7px;height:7px;background:#0000FF;"></div>
<div style="left:741px;top:321px;width:7px;height:7px;background:#0000FF;"></div>
<div style="left:857px;top:321px;width:7px;height:7px;background:#0000FF;"></div>
<svg style="left:0;top:0" width="1024" height="440" viewBox="0 0 1024 440" shape-rendering="crispEdges" fill="none" stroke-width="1"><path d="M848 335.5 H873.5 L860.5 348.5 Z" stroke="#0000FF"/><circle cx="670.5" cy="223.5" r="20.3" stroke="#0000A0"/><path d="M670.5 213 V228 M667.5 228.5 H673.5 L670.5 234.5 Z" stroke="#0000A0"/><path d="M744 187.5 H749.5 L754.5 176.5 L765.5 197.5 L776.5 176.5 L787 197.5 L791.5 187.5 H797.5" stroke="#0000A0"/><path d="M955.5 187.5 H950.5 L945.5 197.5 L934.5 176.5 L924 197.5 L913.5 176.5 L908 187.5 H902" stroke="#0000A0"/><path d="M850 258.5 H872 M850 264.5 H872 M860.5 264.5 V266" stroke="#0000A0"/><path d="M744.5 240.5 L748.0 240.5 C756.5 241.0 757.5 255.0 750.5 257.0 C745.5 255.5 738.5 256.0 736.5 258.5 C738.5 261.0 745.5 261.5 750.5 260.0 C757.5 262.0 757.5 272.0 750.5 274.0 C745.5 272.5 738.5 273.0 736.5 275.5 C738.5 278.0 745.5 278.5 750.5 277.0 C757.5 279.0 756.5 292.0 748.0 293.5 L744.5 293.5" stroke="#0000A0"/><path d="M955.5 292.5 L952.0 292.5 C943.5 292.0 942.5 278.0 949.5 276.0 C954.5 277.5 961.5 277.0 963.5 274.5 C961.5 272.0 954.5 271.5 949.5 273.0 C942.5 271.0 942.5 261.0 949.5 259.0 C954.5 260.5 961.5 260.0 963.5 257.5 C961.5 255.0 954.5 254.5 949.5 256.0 C942.5 254.0 943.5 241.0 952.0 239.5 L955.5 239.5" stroke="#0000A0"/><circle cx="738.5" cy="284.5" r="2" stroke="#0000A0"/><circle cx="960.5" cy="247.5" r="2" stroke="#0000A0"/></svg>
<span style="left:686.4px;top:189.45px;font-size:14px;line-height:14px;color:#000000;font-weight:700;font-style:normal;letter-spacing:-0.544px;">I1</span>
<span style="left:760.4px;top:159.65px;font-size:14px;line-height:14px;color:#000000;font-weight:700;font-style:normal;letter-spacing:-0.103px;">R1</span>
<span style="left:766.4px;top:199.15px;font-size:14px;line-height:14px;color:#000000;font-weight:700;font-style:normal;letter-spacing:0.000px;">1</span>
<span style="left:918.9px;top:159.65px;font-size:14px;line-height:14px;color:#000000;font-weight:700;font-style:normal;letter-spacing:0.797px;">R2</span>
<span style="left:925.4px;top:199.15px;font-size:14px;line-height:14px;color:#000000;font-weight:700;font-style:normal;letter-spacing:0.000px;">1</span>
<span style="left:757.4px;top:248.65px;font-size:14px;line-height:14px;color:#000000;font-weight:700;font-style:normal;letter-spacing:-0.472px;">L1</span>
<span style="left:757.4px;top:274.65px;font-size:14px;line-height:14px;color:#000000;font-weight:700;font-style:normal;letter-spacing:0.186px;">10µ</span>
<span style="left:865.4px;top:237.85px;font-size:14px;line-height:14px;color:#000000;font-weight:700;font-style:normal;letter-spacing:-0.353px;">C1</span>
<span style="left:864.4px;top:269.65px;font-size:14px;line-height:14px;color:#000000;font-weight:700;font-style:normal;letter-spacing:0.358px;">30p</span>
<span style="left:925.0px;top:242.65px;font-size:14px;line-height:14px;color:#000000;font-weight:700;font-style:normal;letter-spacing:0.128px;">L2</span>
<span style="left:917.6px;top:269.65px;font-size:14px;line-height:14px;color:#000000;font-weight:700;font-style:normal;letter-spacing:0.120px;">10µ</span>
<span style="left:670.1px;top:375.65px;font-size:14px;line-height:14px;color:#000000;font-weight:700;font-style:normal;letter-spacing:0.215px;">.tran 0 3u 0</span>
<span style="left:892.1px;top:375.65px;font-size:14px;line-height:14px;color:#000000;font-weight:700;font-style:normal;letter-spacing:0.254px;">K L1 L2 0.990</span>
<svg style="left:20px;top:58px" width="16" height="16" viewBox="0 0 16 16" shape-rendering="crispEdges"><path d="M1.5 0.5 H10.5 L14.5 4.5 V14.5 H1.5 Z" fill="#FFF" stroke="#000"/><path d="M10.5 0.5 V4.5 H14.5" fill="none" stroke="#000"/><path d="M1.8 10.8 L5.5 6.8 L7 5 H13.8 L12.5 7.2 H11.5 L9.2 10 L8 11.5 L7.5 10.8 Z" fill="#FF0000"/><path d="M7.3 7.2 L9.3 6.6 L10 7.6 L8.6 9.4 L7 9 L6.6 8.2 Z" fill="#FFF"/></svg>
<svg style="left:44px;top:57px" width="17" height="16" viewBox="0 0 17 16" shape-rendering="crispEdges"><path d="M0.5 14.5 V5.5 L1.5 4.5 H4.5 L5.5 5.5 H11.5 V9.5" fill="#F4F47C" stroke="#000"/><path d="M0.5 14.5 L4.5 9.5 H15.5 L11.5 14.5 Z" fill="#808000" stroke="#000"/><path d="M8.5 3.5 L10.5 1.5 H12.5 L14.5 3.5 M12.5 4.5 H14.5 V2.5" fill="none" stroke="#000"/></svg>
<svg style="left:75px;top:58px" width="14" height="14" viewBox="0 0 14 14" shape-rendering="crispEdges"><rect x="0.5" y="0.5" width="13" height="13" fill="#808000" stroke="#000"/><rect x="3" y="1" width="8" height="6" fill="#ECE9D8"/><rect x="3" y="8" width="8" height="5" fill="#000"/><rect x="8" y="9" width="2" height="3" fill="#FFF"/><rect x="12" y="1" width="1" height="1" fill="#FFF"/></svg>
<svg style="left:105px;top:58px" width="17" height="16" viewBox="0 0 17 16"><path d="M0.5 2.5 Q1 1.2 2.5 1.5 Q3.5 2.8 4.5 2.6 Q5.5 1.2 7 0.8 Q10 -0.2 13 1 Q15.3 2.2 15.7 4 L16 7.5 Q15 6.5 14.2 6.2 L12.6 5.4 Q10 6 8.2 5.9 L4.4 6 Q3 7 1.5 6.5 Q0.3 5.5 0.5 2.5 Z" fill="#F0F0EC" stroke="#000" stroke-width="1.1"/><path d="M5.5 4.6 Q9 5.2 12.5 4.2" stroke="#B8B8B0" fill="none"/><rect x="7.4" y="6.6" width="3" height="4.4" fill="#0000B0"/><rect x="6.4" y="10.8" width="4.8" height="4" fill="#0000FF"/><rect x="6.4" y="10.8" width="1.8" height="4" fill="#0000A8"/></svg>
<svg style="left:135px;top:57px" width="17" height="17" viewBox="0 0 17 17"><path d="M10.5 1 h4 l-1 2.5 h-2.5 z" fill="#000"/><rect x="12" y="1.6" width="1.2" height="1.2" fill="#FFF"/><path d="M11.5 3.5 L9.5 7.5 L6.5 10 L4 12 H1 V13.5 M9.5 7.5 L8.5 10.5 L9.5 12.5 L8.5 15.5 M10.5 5 L8 4.2 L5.5 5.5 M10.5 6.5 L12 8.2 L14 7.5" fill="none" stroke="#000" stroke-width="1.25"/><path d="M10.8 3.5 L8.2 9 L6.5 10 L9.6 8.5 Z" fill="#000" stroke="#000" stroke-width="0.6"/><path d="M1 3 L3 2 M2.5 1 L4.5 2.2" stroke="#ACA899" fill="none"/></svg>
<svg style="left:160px;top:58px" width="15" height="17" viewBox="0 0 15 17"><g style="color:#FFFFFF" transform="translate(1,1)"><path d="M3.5 10.5 L0.5 7.5 L1.5 6.5 L3.5 7.5 V2.5 Q4.5 1 5.5 2.5 V1.5 Q6.5 0 7.5 1.5 V2 Q8.5 1 9.5 2.5 V4 Q10.5 3 11.5 4.5 V10.5 L10.5 14.5 H5.5 Z M5.5 2.5 V7 M7.5 2 V7 M9.5 3 V7" fill="none" stroke="currentColor"/></g><g style="color:#ACA899"><path d="M3.5 10.5 L0.5 7.5 L1.5 6.5 L3.5 7.5 V2.5 Q4.5 1 5.5 2.5 V1.5 Q6.5 0 7.5 1.5 V2 Q8.5 1 9.5 2.5 V4 Q10.5 3 11.5 4.5 V10.5 L10.5 14.5 H5.5 Z M5.5 2.5 V7 M7.5 2 V7 M9.5 3 V7" fill="none" stroke="currentColor"/></g></svg>
<svg style="left:190px;top:57px" width="17" height="17" viewBox="0 0 17 17"><circle cx="6.3" cy="6.4" r="5" fill="#ECE9D8" stroke="#000" stroke-width="1.05"/><path d="M2.8 5.2 Q3.6 3.2 5.4 2.8 M9.6 7.2 Q9 9 7.4 9.8" stroke="#00FFFF" stroke-width="1.2" fill="none"/><path d="M6.3 3.4 V9.4 M3.3 6.4 H9.3" stroke="#000" stroke-width="1.2"/><path d="M10.3 10.4 L14.8 14.9" stroke="#000" stroke-width="2" stroke-linecap="round"/></svg>
<svg style="left:213px;top:57px" width="17" height="17" viewBox="0 0 17 17"><circle cx="6.3" cy="6.4" r="5" fill="#ECE9D8" stroke="#000" stroke-width="1.05"/><path d="M2.8 5.2 Q3.6 3.2 5.4 2.8 M9.6 7.2 Q9 9 7.4 9.8" stroke="#00FFFF" stroke-width="1.2" fill="none"/><path d="M10.3 10.4 L14.8 14.9" stroke="#000" stroke-width="2" stroke-linecap="round"/></svg>
<svg style="left:236px;top:57px" width="17" height="17" viewBox="0 0 17 17"><circle cx="6.3" cy="6.4" r="5" fill="#ECE9D8" stroke="#000" stroke-width="1.05"/><path d="M2.8 5.2 Q3.6 3.2 5.4 2.8 M9.6 7.2 Q9 9 7.4 9.8" stroke="#00FFFF" stroke-width="1.2" fill="none"/><path d="M3.8 6.4 H8.8" stroke="#000" stroke-width="1.2"/><path d="M10.3 10.4 L14.8 14.9" stroke="#000" stroke-width="2" stroke-linecap="round"/></svg>
<svg style="left:259px;top:57px" width="17" height="17" viewBox="0 0 17 17"><circle cx="6.3" cy="6.4" r="5" fill="#ECE9D8" stroke="#000" stroke-width="1.05"/><path d="M2.8 5.2 Q3.6 3.2 5.4 2.8 M9.6 7.2 Q9 9 7.4 9.8" stroke="#00FFFF" stroke-width="1.2" fill="none"/><path d="M0.5 0.5 L10 13.5 M12.5 1.5 L0.5 9.5 L5 10" stroke="#FF0000" stroke-width="1.3" fill="none"/><path d="M10.3 10.4 L14.8 14.9" stroke="#000" stroke-width="2" stroke-linecap="round"/></svg>
<svg style="left:290px;top:58px" width="17" height="16" viewBox="0 0 17 16" shape-rendering="crispEdges"><rect x="1" y="0" width="1" height="14" fill="#000"/><rect x="1" y="13" width="15" height="1" fill="#000"/><rect x="0" y="1" width="1" height="1" fill="#000"/><rect x="0" y="3" width="1" height="1" fill="#000"/><rect x="0" y="5" width="1" height="1" fill="#000"/><rect x="0" y="7" width="1" height="1" fill="#000"/><rect x="0" y="9" width="1" height="1" fill="#000"/><rect x="0" y="11" width="1" height="1" fill="#000"/><rect x="0" y="13" width="1" height="1" fill="#000"/><rect x="3" y="14" width="1" height="1" fill="#000"/><rect x="5" y="14" width="1" height="1" fill="#000"/><rect x="7" y="14" width="1" height="1" fill="#000"/><rect x="9" y="14" width="1" height="1" fill="#000"/><rect x="11" y="14" width="1" height="1" fill="#000"/><rect x="13" y="14" width="1" height="1" fill="#000"/><rect x="15" y="14" width="1" height="1" fill="#000"/><path d="M2 2.5 L3.5 3.5 L6.5 0.5 L9.5 3.5 L12.5 0.5 L16 4" stroke="#000080" fill="none"/><path d="M2 6.5 H4 M4 5.5 H7 M7 6.5 H10 M10 7.5 H13 M13 6.5 H16" stroke="#FF0000" stroke-width="1.4" fill="none"/><path d="M2 9.5 H6 M6 10.5 H9 M9 9.5 H13 M13 10.5 H16" stroke="#000080" stroke-width="1.6" fill="none"/></svg>
<svg style="left:313px;top:58px" width="17" height="16" viewBox="0 0 17 16" shape-rendering="crispEdges"><rect x="1" y="0" width="1" height="14" fill="#000"/><rect x="1" y="13" width="15" height="1" fill="#000"/><rect x="0" y="1" width="1" height="1" fill="#000"/><rect x="0" y="3" width="1" height="1" fill="#000"/><rect x="0" y="5" width="1" height="1" fill="#000"/><rect x="0" y="7" width="1" height="1" fill="#000"/><rect x="0" y="9" width="1" height="1" fill="#000"/><rect x="0" y="11" width="1" height="1" fill="#000"/><rect x="0" y="13" width="1" height="1" fill="#000"/><rect x="3" y="14" width="1" height="1" fill="#000"/><rect x="5" y="14" width="1" height="1" fill="#000"/><rect x="7" y="14" width="1" height="1" fill="#000"/><rect x="9" y="14" width="1" height="1" fill="#000"/><rect x="11" y="14" width="1" height="1" fill="#000"/><rect x="13" y="14" width="1" height="1" fill="#000"/><rect x="15" y="14" width="1" height="1" fill="#000"/><path d="M12 0.5 H10 L8 2.500 L7.500 4.500 V8.500 L8 10.5 L10 12.5 H12" stroke="#FF0000" stroke-width="1.2" fill="none"/><path d="M5.5 3 V10 M4.5 4.500 H6.5 M4.5 8.500 H6.5" stroke="#000" fill="none"/><path d="M13.5 1 V12 M12.5 2.5 H14.5 M11.5 3.5 H15.5 M12.5 10.5 H14.5 M11.5 9.500 H15.5" stroke="#000" fill="none"/></svg>
<svg style="left:344px;top:58px" width="16" height="15" viewBox="0 0 16 15" shape-rendering="crispEdges"><rect x="0" y="0" width="16" height="8" fill="#000080"/><rect x="1" y="3" width="14" height="4" fill="#ECE9D8"/><rect x="1" y="1" width="1" height="1" fill="#FFF"/><rect x="14" y="1" width="1" height="1" fill="#FFF"/><rect x="12" y="1" width="1" height="1" fill="#FFF"/><rect x="0" y="7" width="16" height="8" fill="#000080"/><rect x="1" y="10" width="14" height="4" fill="#ECE9D8"/><rect x="1" y="8" width="1" height="1" fill="#FFF"/><rect x="14" y="8" width="1" height="1" fill="#FFF"/><rect x="12" y="8" width="1" height="1" fill="#FFF"/></svg>
<svg style="left:367px;top:58px" width="16" height="15" viewBox="0 0 16 15" shape-rendering="crispEdges"><rect x="0" y="0" width="10" height="8" fill="#000080"/><rect x="1" y="3" width="8" height="4" fill="#ECE9D8"/><rect x="1" y="1" width="1" height="1" fill="#FFF"/><rect x="3" y="4" width="10" height="8" fill="#000080"/><rect x="4" y="7" width="8" height="4" fill="#ECE9D8"/><rect x="4" y="5" width="1" height="1" fill="#FFF"/><rect x="6" y="8" width="10" height="7" fill="#000080"/><rect x="7" y="11" width="8" height="3" fill="#ECE9D8"/><rect x="7" y="9" width="1" height="1" fill="#FFF"/></svg>
<svg style="left:390px;top:58px" width="17" height="15" viewBox="0 0 17 15" shape-rendering="crispEdges"><rect x="0" y="0" width="8" height="8" fill="#000080"/><rect x="1" y="3" width="6" height="4" fill="#ECE9D8"/><rect x="1" y="1" width="1" height="1" fill="#FFF"/><rect x="3" y="4" width="8" height="8" fill="#000080"/><rect x="4" y="7" width="6" height="4" fill="#ECE9D8"/><rect x="4" y="5" width="1" height="1" fill="#FFF"/><rect x="6" y="8" width="8" height="7" fill="#000080"/><rect x="7" y="11" width="6" height="3" fill="#ECE9D8"/><rect x="7" y="9" width="1" height="1" fill="#FFF"/><rect x="8" y="12" width="4" height="1" fill="#000"/><path d="M12.5 3.5 V0.5 H15.5 M12.5 0.5 L16 4.5" stroke="#000" stroke-width="1.4" fill="none"/></svg>
<svg style="left:424px;top:58px" width="11" height="15" viewBox="0 0 11 15"><path d="M2.9 0 L6.6 8 M8 0 L4.2 8" stroke="#000" stroke-width="1.2" fill="none"/><ellipse cx="2.8" cy="10.8" rx="1.5" ry="2.6" transform="rotate(15 2.8 10.8)" stroke="#000080" stroke-width="1.1" fill="none"/><ellipse cx="8.2" cy="10.5" rx="1.5" ry="2.6" transform="rotate(-15 8.2 10.5)" stroke="#000080" stroke-width="1.1" fill="none"/></svg>
<svg style="left:445px;top:58px" width="16" height="14" viewBox="0 0 16 14" shape-rendering="crispEdges"><path d="M0.5 0.5 H4.5 L7.5 3.5 V9.5 H0.5 Z" fill="#FFF" stroke="#000"/><path d="M2 3.5 H5 M2 5.5 H6 M2 7.5 H6" stroke="#000"/><path d="M6.500 4.500 H11.5 L14.5 7.500 V13.5 H6.500 Z" fill="#FFF" stroke="#000080"/><path d="M8 7.500 H11 M8 9.500 H13 M8 11.5 H13" stroke="#000"/></svg>
<svg style="left:468px;top:58px" width="16" height="15" viewBox="0 0 16 15"><rect x="1" y="2" width="13" height="12" rx="2" fill="#FFF"/><rect x="0" y="1" width="13" height="12" rx="2" fill="#ACA899"/><rect x="4" y="0" width="5" height="2" fill="#ACA899"/><rect x="4" y="2" width="5" height="1" fill="#ECE9D8"/><rect x="6" y="6" width="8" height="8" fill="#ECE9D8" stroke="#ACA899"/><path d="M8 9.5 H12 M8 11.5 H12" stroke="#ACA899"/><path d="M7 14.5 H14.5 V7" stroke="#FFF" fill="none"/></svg>
<svg style="left:490px;top:59px" width="17" height="14" viewBox="0 0 17 14" shape-rendering="crispEdges"><path d="M3 0 H6 V2 H7 V4 H9 V2 H10 V0 H13 V2 L16 9 V13 H11 V8 H5 V13 H0 V9 L3 2 Z" fill="#000"/><rect x="4" y="1" width="1" height="1" fill="#FFF"/><rect x="11" y="1" width="1" height="1" fill="#FFF"/><rect x="2" y="9" width="1" height="3" fill="#FFF"/><rect x="12" y="9" width="1" height="3" fill="#FFF"/><rect x="7" y="5" width="2" height="2" fill="#FFF"/></svg>
<svg style="left:521px;top:58px" width="17" height="15" viewBox="0 0 17 15" shape-rendering="crispEdges"><path d="M5.5 5.500 V1.5 H11.5 L13.5 3.500 V5.500" fill="#FFF" stroke="#000"/><path d="M8.5 2.500 L10 4 L11.5 2.500" fill="none" stroke="#000"/><path d="M3.500 5.500 H14.5 L15.5 6.500 V13.5 H2.500 L1.5 12.5 V8.500 L2.500 6.500 Z" fill="#FFF" stroke="#000"/><rect x="4" y="7" width="10" height="5" fill="#C8C8C0"/><path d="M2.500 13.5 H15.5" stroke="#000" stroke-width="2"/></svg>
<svg style="left:543px;top:57px" width="18" height="16" viewBox="0 0 18 16" shape-rendering="crispEdges"><path d="M4.5 6.500 L6.500 0.5 H14.5 L12.5 6.500 Z" fill="#FFF" stroke="#000"/><path d="M7 2.500 H13 M6.500 4.500 H12" stroke="#000"/><path d="M2.500 6.500 H13.5 L16.5 4.500 V10.5 L13.5 14.5 H1.5 L0.5 12.5 V8.500 Z" fill="#ECE9D8" stroke="#000"/><path d="M1 9.500 H13 M1 12.5 H13 M13.5 7 V14" stroke="#000"/><rect x="6" y="10.5" width="4" height="1.500" fill="#E0E000"/><rect x="14" y="6" width="1" height="1" fill="#000"/><rect x="15" y="8" width="1" height="1" fill="#000"/><rect x="14" y="10" width="1" height="1" fill="#000"/></svg>
<svg style="left:576px;top:57px" width="17" height="17" viewBox="0 0 17 17"><g style="color:#FFFFFF" transform="translate(1,1)"><path d="M8 1 L11.5 2 L4.5 13.5 L1 13.5 L1 11.5 Z" fill="currentColor" stroke="none"/><path d="M1 14.5 H14.5" stroke="currentColor" fill="none"/></g><g style="color:#ACA899"><path d="M8 1 L11.5 2 L4.5 13.5 L1 13.5 L1 11.5 Z" fill="currentColor" stroke="none"/><path d="M1 14.5 H14.5" stroke="currentColor" fill="none"/></g></svg>
<svg style="left:597px;top:57px" width="18" height="17" viewBox="0 0 18 17"><g style="color:#FFFFFF" transform="translate(1,1)"><path d="M8.5 1 V8.5 M1 8.5 H16 L8.5 15.5 Z" stroke="currentColor" fill="none" stroke-width="1.3"/></g><g style="color:#ACA899"><path d="M8.5 1 V8.5 M1 8.5 H16 L8.5 15.5 Z" stroke="currentColor" fill="none" stroke-width="1.3"/></g></svg>
<svg style="left:620px;top:58px" width="18" height="16" viewBox="0 0 18 16"><g style="color:#FFFFFF" transform="translate(1,1)"><rect x="1.5" y="1.5" width="14" height="8.5" rx="1.5" stroke="currentColor" fill="none" stroke-width="1.4"/><path d="M6.5 8.5 V4.5 L7.5 3.5 H9.5 L10.5 4.5 V8.5 M6.5 6.5 H10.5" stroke="currentColor" fill="none"/><path d="M8.5 10.5 V15" stroke="currentColor" fill="none"/></g><g style="color:#ACA899"><rect x="1.5" y="1.5" width="14" height="8.5" rx="1.5" stroke="currentColor" fill="none" stroke-width="1.4"/><path d="M6.5 8.5 V4.5 L7.5 3.5 H9.5 L10.5 4.5 V8.5 M6.5 6.5 H10.5" stroke="currentColor" fill="none"/><path d="M8.5 10.5 V15" stroke="currentColor" fill="none"/></g></svg>
<svg style="left:645px;top:57px" width="16" height="18" viewBox="0 0 16 18"><g style="color:#FFFFFF" transform="translate(1,1)"><path d="M5.5 1 L6.5 2.5 L12.5 5.5 L1.5 10 L6.5 13 L7 15.5" stroke="currentColor" fill="none" stroke-width="1.2"/></g><g style="color:#ACA899"><path d="M5.5 1 L6.5 2.5 L12.5 5.5 L1.5 10 L6.5 13 L7 15.5" stroke="currentColor" fill="none" stroke-width="1.2"/></g></svg>
<svg style="left:668px;top:57px" width="15" height="17" viewBox="0 0 15 17"><g style="color:#FFFFFF" transform="translate(1,1)"><path d="M6.5 1 V6 M6.5 12 V16" stroke="currentColor" fill="none"/><path d="M1 7 H12 M1 11.5 H12" stroke="currentColor" fill="none" stroke-width="1.8"/></g><g style="color:#ACA899"><path d="M6.5 1 V6 M6.5 12 V16" stroke="currentColor" fill="none"/><path d="M1 7 H12 M1 11.5 H12" stroke="currentColor" fill="none" stroke-width="1.8"/></g></svg>
<svg style="left:693px;top:57px" width="10" height="17" viewBox="0 0 10 17"><g style="color:#FFFFFF" transform="translate(1,1)"><path d="M2.5 1.5 Q7 2.5 7 5 Q7 7.2 4 8 Q7.5 9 7.5 11.5 Q7.5 14 3 15.2" stroke="currentColor" fill="none" stroke-width="1.2"/></g><g style="color:#ACA899"><path d="M2.5 1.5 Q7 2.5 7 5 Q7 7.2 4 8 Q7.5 9 7.5 11.5 Q7.5 14 3 15.2" stroke="currentColor" fill="none" stroke-width="1.2"/></g></svg>
<svg style="left:713px;top:57px" width="18" height="17" viewBox="0 0 18 17"><g style="color:#FFFFFF" transform="translate(1,1)"><path d="M8.5 1 V16 M1 5.500 H16 L8.5 12.5 Z M1 12.5 H16" stroke="currentColor" fill="none" stroke-width="1.2"/></g><g style="color:#ACA899"><path d="M8.5 1 V16 M1 5.500 H16 L8.5 12.5 Z M1 12.5 H16" stroke="currentColor" fill="none" stroke-width="1.2"/></g></svg>
<svg style="left:735px;top:58px" width="18" height="15" viewBox="0 0 18 15"><g style="color:#FFFFFF" transform="translate(1,1)"><path d="M4.500 3.500 H9 Q14 3.500 14 8 Q14 12.5 9 12.5 H4.500 Z" stroke="currentColor" fill="none" stroke-width="1.8"/><path d="M1 5.500 H4 M1 10.5 H4 M14.5 8 H17.5" stroke="currentColor" fill="none"/></g><g style="color:#ACA899"><path d="M4.500 3.500 H9 Q14 3.500 14 8 Q14 12.5 9 12.5 H4.500 Z" stroke="currentColor" fill="none" stroke-width="1.8"/><path d="M1 5.500 H4 M1 10.5 H4 M14.5 8 H17.5" stroke="currentColor" fill="none"/></g></svg>
<svg style="left:758px;top:57px" width="19" height="18" viewBox="0 0 19 18"><g style="color:#FFFFFF" transform="translate(1,1)"><path d="M7.500 14.5 L1.5 7.500 Q1 6 2.500 6 L5.5 8 L4 2.500 Q4.500 0.5 6 2 L8 6 L9.5 1.5 Q11 0 11.5 2 L11.5 6.500 L13.5 3 Q15 2 15.5 4 L14 8.5 Q16 7 16.5 8.5 L13.5 12.5 L12.5 15.5 H7.500 Z M8 6 L9 8.5 M11.5 6.500 L11 9 M14 8.5 L13 10.5" stroke="currentColor" fill="none"/></g><g style="color:#ACA899"><path d="M7.500 14.5 L1.5 7.500 Q1 6 2.500 6 L5.5 8 L4 2.500 Q4.500 0.5 6 2 L8 6 L9.5 1.5 Q11 0 11.5 2 L11.5 6.500 L13.5 3 Q15 2 15.5 4 L14 8.5 Q16 7 16.5 8.5 L13.5 12.5 L12.5 15.5 H7.500 Z M8 6 L9 8.5 M11.5 6.500 L11 9 M14 8.5 L13 10.5" stroke="currentColor" fill="none"/></g></svg>
<svg style="left:783px;top:59px" width="15" height="15" viewBox="0 0 15 15"><g style="color:#FFFFFF" transform="translate(1,1)"><path d="M4 12.5 L3.500 9.5 L1 7 Q0.5 5 2.500 5 L4 6.500 V3.500 Q4.500 2 6 3 V2 Q7 0.5 8 2 V2.500 Q9.5 1.5 10 3 V4 Q11.5 3.500 12 5 V8 L10.5 10.5 V12.5 Z M6 3 V6 M8 2.500 V6 M10 4 V6.500" stroke="currentColor" fill="none"/></g><g style="color:#ACA899"><path d="M4 12.5 L3.500 9.5 L1 7 Q0.5 5 2.500 5 L4 6.500 V3.500 Q4.500 2 6 3 V2 Q7 0.5 8 2 V2.500 Q9.5 1.5 10 3 V4 Q11.5 3.500 12 5 V8 L10.5 10.5 V12.5 Z M6 3 V6 M8 2.500 V6 M10 4 V6.500" stroke="currentColor" fill="none"/></g></svg>
<svg style="left:805px;top:59px" width="17" height="15" viewBox="0 0 17 15"><path d="M3.5 7 A5.2 5.2 0 1 1 8.5 12.5" stroke="#000" stroke-width="1.15" fill="none"/><path d="M5.5 3.300 A5.2 5.2 0 0 1 13 4.500" stroke="#808000" stroke-width="1.15" fill="none"/><path d="M1 4 L1.5 8.5 L6 7.500 Z" fill="#000"/></svg>
<svg style="left:828px;top:59px" width="17" height="15" viewBox="0 0 17 15"><g style="color:#FFFFFF" transform="translate(1,1)"><path d="M13 7 A5.2 5.2 0 1 0 8 12.5" stroke="currentColor" fill="none" stroke-width="1.1"/><path d="M15.5 4 L15 8.5 L10.5 7.500 Z" fill="currentColor" stroke="none"/></g><g style="color:#ACA899"><path d="M13 7 A5.2 5.2 0 1 0 8 12.5" stroke="currentColor" fill="none" stroke-width="1.1"/><path d="M15.5 4 L15 8.5 L10.5 7.500 Z" fill="currentColor" stroke="none"/></g></svg>
<svg style="left:850px;top:57px" width="19" height="10" viewBox="0 0 19 10"><g style="color:#FFFFFF" transform="translate(1,1)"><path d="M2.500 6.500 Q7 0.5 14 4 M11.5 1.500 L14.5 4.500 L10.5 5.5" stroke="currentColor" fill="none"/></g><g style="color:#ACA899"><path d="M2.500 6.500 Q7 0.5 14 4 M11.5 1.500 L14.5 4.500 L10.5 5.5" stroke="currentColor" fill="none"/></g></svg>
<svg style="left:873px;top:57px" width="19" height="10" viewBox="0 0 19 10"><g style="color:#FFFFFF" transform="translate(1,1)"><path d="M2.500 6.500 Q8 0 15 4.500 M12.5 1.500 L15.5 5 L11.5 5.5" stroke="currentColor" fill="none"/></g><g style="color:#ACA899"><path d="M2.500 6.500 Q8 0 15 4.500 M12.5 1.500 L15.5 5 L11.5 5.5" stroke="currentColor" fill="none"/></g></svg>
<span style="left:850.5px;top:61.84px;font-size:12px;line-height:12px;color:#ACA899;font-weight:700;font-style:normal;letter-spacing:0.000px;text-shadow:1px 1px 0 #FFF;transform:scaleX(0.72);transform-origin:0 0;">E</span>
<svg style="left:0;top:0" width="1024" height="440" viewBox="0 0 1024 440" font-family="Liberation Sans, sans-serif" font-size="12" font-weight="700"><text transform="translate(859,66) rotate(90) scale(0.68,1)" x="-0.9" y="0" fill="#FFFFFF">E</text><text transform="translate(858,65) rotate(90) scale(0.68,1)" x="-0.9" y="0" fill="#ACA899">E</text></svg>
<span style="left:873.5px;top:61.84px;font-size:12px;line-height:12px;color:#ACA899;font-weight:700;font-style:normal;letter-spacing:0.000px;text-shadow:1px 1px 0 #FFF;transform:scaleX(0.72);transform-origin:0 0;">E</span>
<span style="left:890.8px;top:61.84px;font-size:12px;line-height:12px;color:#ACA899;font-weight:700;font-style:normal;letter-spacing:0.000px;text-shadow:-1px 1px 0 #FFF;transform:scaleX(-0.72);transform-origin:0 0;">E</span>
<span style="left:897px;top:58.5px;font-family:'Liberation Serif',serif;font-size:13px;line-height:13px;font-weight:700;font-style:italic;color:#ACA899;text-shadow:1px 1px 0 #FFF;letter-spacing:-0.5px">Aa</span>
<span style="left:920px;top:60.53px;font-size:10px;line-height:10px;color:#ACA899;font-weight:700;font-style:normal;letter-spacing:0.000px;text-shadow:1px 1px 0 #FFF;">.op</span>
<span style="left:625.2px;top:59.88px;font-size:9px;line-height:9px;color:#ACA899;font-weight:700;font-style:normal;letter-spacing:0.000px;text-shadow:1px 1px 0 #FFF;">A</span>
</div></body></html>
